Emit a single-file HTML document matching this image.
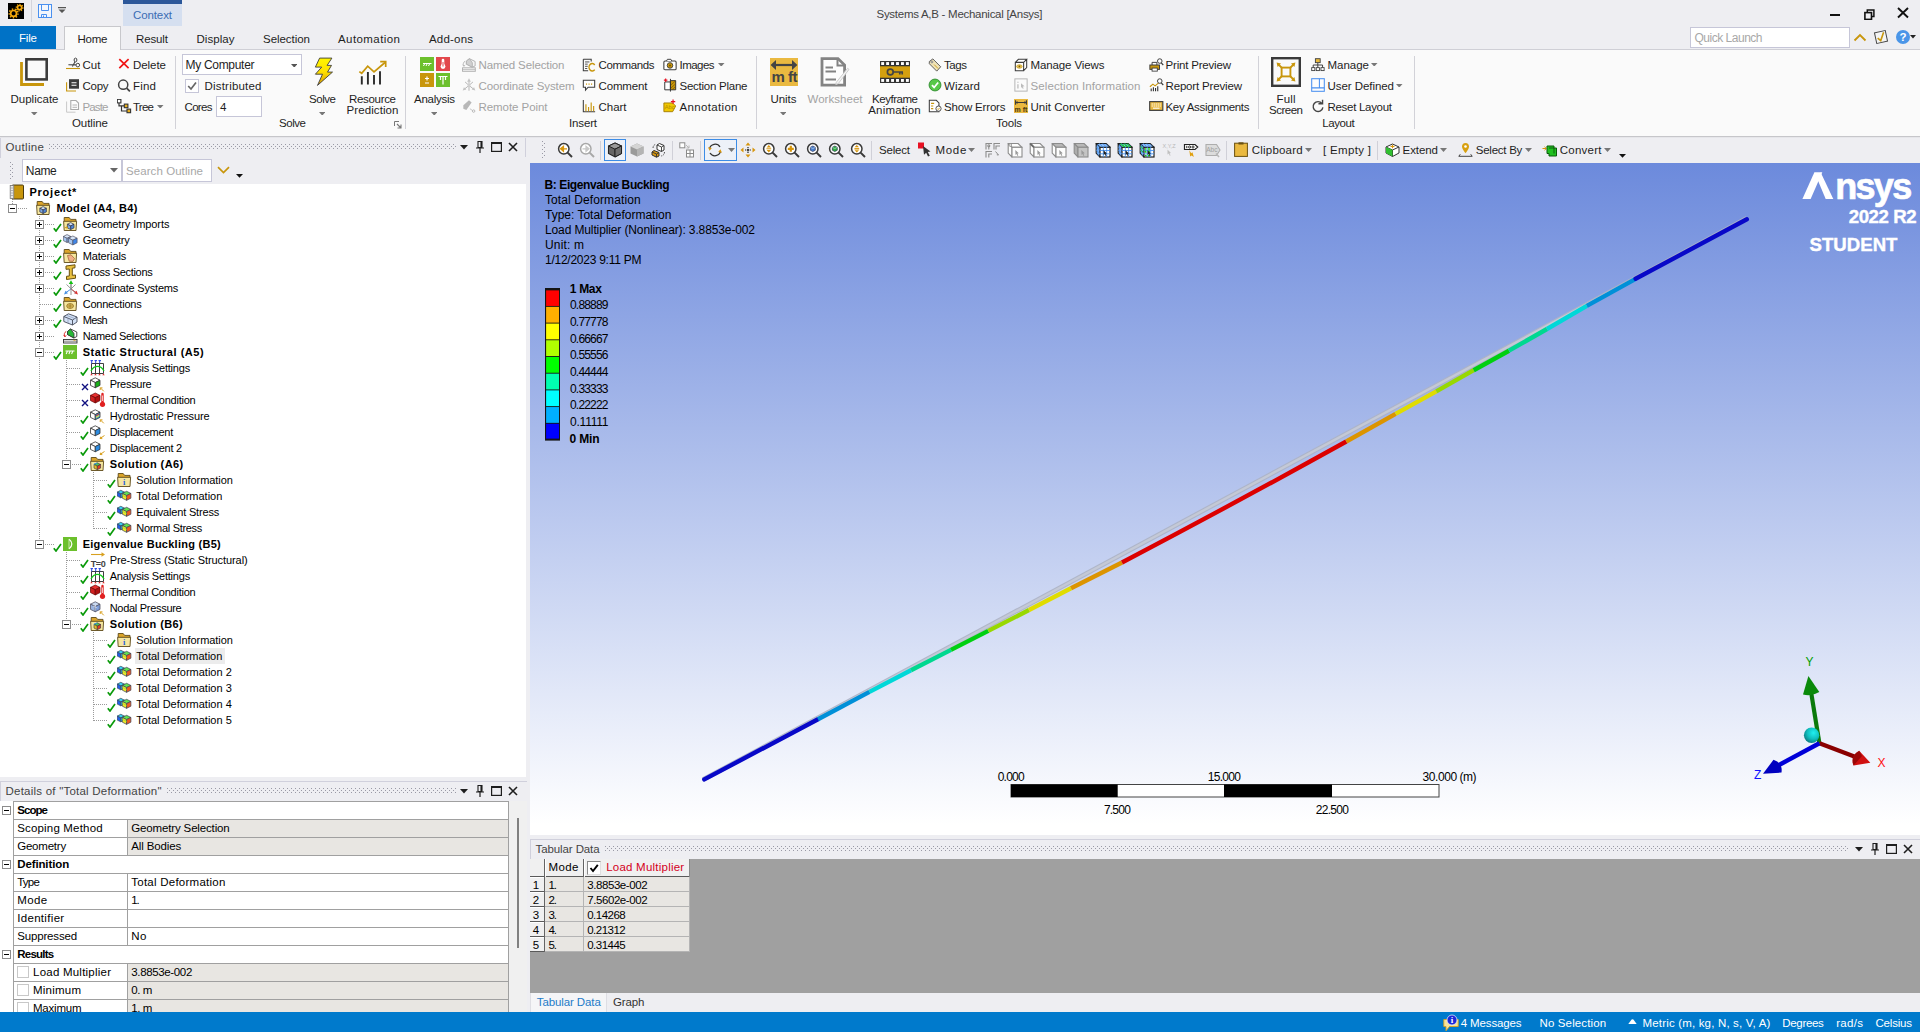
<!DOCTYPE html>
<html><head><meta charset="utf-8"><title>Systems A,B - Mechanical [Ansys]</title>
<style>
html,body{margin:0;padding:0;}
body{width:1920px;height:1032px;overflow:hidden;position:relative;background:#eeeef2;font-family:"Liberation Sans",sans-serif;}
.t{position:absolute;white-space:pre;font-family:"Liberation Sans",sans-serif;}
.r{position:absolute;display:block;}
svg text{white-space:pre;}
</style></head><body>
<div class="r" style="left:0px;top:0px;width:1920px;height:50px;background:#eeeef2;"></div>
<svg class="r" style="left:8px;top:3px;" width="16" height="16" viewBox="0 0 16 16"><rect width="16" height="16" fill="#000"/><g fill="none" stroke="#f5a80c" stroke-width="1.7"><circle cx="5.6" cy="10.4" r="2.9"/><circle cx="11.6" cy="4.6" r="2.1"/></g><g stroke="#f5a80c" stroke-width="1.4" stroke-dasharray="1.5 1.55" fill="none"><circle cx="5.6" cy="10.4" r="4.4"/></g><g stroke="#f5a80c" stroke-width="1.2" stroke-dasharray="1.2 1.3" fill="none"><circle cx="11.6" cy="4.6" r="3.3"/></g></svg>
<div class="r" style="left:31px;top:0px;width:1px;height:22px;background:#d4d4dc;"></div>
<svg class="r" style="left:38px;top:4px;" width="14" height="14" viewBox="0 0 14 14"><rect x="0.5" y="0.5" width="13" height="13" fill="#f3f6fc" stroke="#4a90f0" stroke-width="1"/><path d="M3.5 0.5V6.5H10.5V0.5" fill="none" stroke="#4a90f0" stroke-width="1"/><path d="M3.5 13.5V10.5H8.5V13.5M5.5 11.5V13.5" fill="none" stroke="#4a90f0" stroke-width="1"/></svg>
<svg class="r" style="left:58px;top:7px;" width="8" height="6" viewBox="0 0 8 6"><path d="M0 0H8V1.2H0z M0.5 2.5H7.5L4 6z" fill="#555"/></svg>
<div class="r" style="left:123px;top:0px;width:59px;height:4px;background:#2b579a;"></div>
<div class="r" style="left:123px;top:4px;width:59px;height:22px;background:#d5dff0;"></div>
<span class="t" style="left:133.00px;top:7.80px;font-size:11.5px;line-height:14px;color:#3a6cb4;letter-spacing:-0.105px;">Context</span>
<span class="t" style="left:876.50px;top:7.00px;font-size:11.5px;line-height:14px;color:#444;letter-spacing:-0.273px;">Systems A,B - Mechanical [Ansys]</span>
<div class="r" style="left:1830px;top:14px;width:10px;height:2px;background:#111;"></div>
<svg class="r" style="left:1863.5px;top:8.8px;" width="11" height="11.5" viewBox="0 0 11 11.5"><path d="M3.3 3.2V0.9H9.9V7.5H7.8" fill="none" stroke="#111" stroke-width="1.5"/><rect x="0.9" y="3.6" width="6.6" height="6.8" fill="none" stroke="#111" stroke-width="1.6"/></svg>
<svg class="r" style="left:1897px;top:7px;" width="12" height="12" viewBox="0 0 12 12"><path d="M1 1L11 10.5M11 1L1 10.5" stroke="#111" stroke-width="1.9"/></svg>
<div class="r" style="left:0px;top:26px;width:56px;height:23px;background:#0072c6;"></div>
<span class="t" style="left:19.00px;top:31.00px;font-size:11.5px;line-height:14px;color:#fff;letter-spacing:-0.176px;">File</span>
<div class="r" style="left:0px;top:49px;width:1920px;height:1px;background:#cfcfd6;"></div>
<div class="r" style="left:0px;top:50px;width:1920px;height:86px;background:#fafafa;"></div>
<div class="r" style="left:0px;top:136px;width:1920px;height:1px;background:#c6c6ca;"></div>
<div class="r" style="left:0px;top:137px;width:1920px;height:1px;background:#e6e6ea;"></div>
<div class="r" style="left:64px;top:26px;width:57px;height:24px;background:#fafafa;border:1px solid #c8c8cc;box-sizing:border-box;border-bottom:none;"></div>
<span class="t" style="left:77.50px;top:32.00px;font-size:11.5px;line-height:14px;color:#1e1e1e;letter-spacing:-0.225px;">Home</span>
<span class="t" style="left:136.00px;top:32.00px;font-size:11.5px;line-height:14px;color:#1e1e1e;letter-spacing:-0.119px;">Result</span>
<span class="t" style="left:196.50px;top:32.00px;font-size:11.5px;line-height:14px;color:#1e1e1e;letter-spacing:0.049px;">Display</span>
<span class="t" style="left:263.00px;top:32.00px;font-size:11.5px;line-height:14px;color:#1e1e1e;letter-spacing:-0.038px;">Selection</span>
<span class="t" style="left:338.00px;top:32.00px;font-size:11.5px;line-height:14px;color:#1e1e1e;letter-spacing:0.426px;">Automation</span>
<span class="t" style="left:429.00px;top:32.00px;font-size:11.5px;line-height:14px;color:#1e1e1e;letter-spacing:0.195px;">Add-ons</span>
<div class="r" style="left:1690px;top:27px;width:160px;height:21px;background:#fff;border:1px solid #c6c6d8;box-sizing:border-box;"></div>
<span class="t" style="left:1694.50px;top:30.00px;font-size:12px;line-height:16px;color:#a8a8a8;letter-spacing:-0.488px;">Quick Launch</span>
<svg class="r" style="left:1853px;top:33px;" width="14" height="9" viewBox="0 0 14 9"><path d="M1.5 7.5L7 2L12.5 7.5" fill="none" stroke="#c8960c" stroke-width="1.8"/></svg>
<svg class="r" style="left:1873px;top:29px;" width="16" height="16" viewBox="0 0 16 16"><g transform="rotate(-12 8 8)"><rect x="2.5" y="2.5" width="11" height="11" fill="#f4f4f4" stroke="#444" stroke-width="1"/><path d="M4.5 8.5L7 11.5L11.5 4" fill="none" stroke="#c8960c" stroke-width="1.6"/></g></svg>
<svg class="r" style="left:1896px;top:30px;" width="14" height="14" viewBox="0 0 14 14"><circle cx="7" cy="7" r="7" fill="#4a95e8"/><text x="7" y="11.3" font-family="Liberation Sans" font-weight="bold" font-size="11.5" fill="#fff" text-anchor="middle">?</text></svg>
<svg class="r" style="left:1910px;top:35px;" width="7" height="4" viewBox="0 0 7 4"><path d="M0 0H6L3 3.5z" fill="#222"/></svg>
<svg class="r" style="left:19px;top:57px;" width="30" height="30" viewBox="0 0 30 30"><path d="M2.5 5V27.5H25" fill="none" stroke="#c8960c" stroke-width="2.8"/><rect x="7.4" y="2.3" width="20.3" height="20.1" fill="#fafafa" stroke="#3c3c3c" stroke-width="2.6"/></svg>
<span class="t" style="left:10.50px;top:92.10px;font-size:11.5px;line-height:14px;color:#1e1e1e;letter-spacing:0.007px;">Duplicate</span>
<svg class="r" style="left:31.3px;top:111.7px;" width="6.5" height="3.6" viewBox="0 0 6.5 3.6"><path d="M0 0H6.5L3.25 3.6z" fill="#777"/></svg>
<svg class="r" style="left:66px;top:57px;" width="16" height="16" viewBox="0 0 16 16"><path d="M0 11.5H14" stroke="#c8960c" stroke-width="1.1"/><path d="M2.4 7.7L9.9 7.9M9 4.8L6.4 9.6" stroke="#444" stroke-width="1.1" fill="none"/><ellipse cx="9.5" cy="3" rx="1.4" ry="1.9" fill="none" stroke="#444" stroke-width="1"/><circle cx="11.8" cy="8.1" r="1.8" fill="none" stroke="#444" stroke-width="1"/></svg>
<span class="t" style="left:82.50px;top:58.00px;font-size:11.5px;line-height:14px;color:#1e1e1e;letter-spacing:0.052px;">Cut</span>
<svg class="r" style="left:66px;top:78px;" width="16" height="16" viewBox="0 0 16 16"><path d="M0.6 4.3V13H10" fill="none" stroke="#c8960c" stroke-width="1.1"/><rect x="3" y="1.2" width="10" height="9.5" fill="#3c3c3c"/><path d="M5.5 4.8H10.5M5.5 7.2H10.5" stroke="#fff" stroke-width="1.1"/></svg>
<span class="t" style="left:82.50px;top:79.00px;font-size:11.5px;line-height:14px;color:#1e1e1e;letter-spacing:-0.282px;">Copy</span>
<svg class="r" style="left:66px;top:99px;" width="16" height="16" viewBox="0 0 16 16"><path d="M0.6 2.5V13.2H9.5" fill="none" stroke="#c8c8c8" stroke-width="1"/><path d="M4.8 1.5H10L12.5 4V10.5H4.8z" fill="#fdfdfd" stroke="#aaa" stroke-width="1.1"/><path d="M6.5 6H11M6.5 8.3H11" stroke="#b4b4b4" stroke-width="1"/></svg>
<span class="t" style="left:82.50px;top:100.00px;font-size:11.5px;line-height:14px;color:#a3a3a3;letter-spacing:-0.851px;">Paste</span>
<svg class="r" style="left:117px;top:57px;" width="16" height="16" viewBox="0 0 16 16"><path d="M2.3 2.2L11.6 11.2M11.6 2.2L2.3 11.2" stroke="#f01414" stroke-width="1.7"/></svg>
<span class="t" style="left:133.00px;top:58.00px;font-size:11.5px;line-height:14px;color:#1e1e1e;letter-spacing:-0.048px;">Delete</span>
<svg class="r" style="left:117px;top:78px;" width="16" height="16" viewBox="0 0 16 16"><circle cx="6.2" cy="6.7" r="4.6" fill="none" stroke="#444" stroke-width="1.5"/><path d="M9.6 10.1L12.9 13.3" stroke="#444" stroke-width="1.8"/></svg>
<span class="t" style="left:133.00px;top:79.00px;font-size:11.5px;line-height:14px;color:#1e1e1e;letter-spacing:0.210px;">Find</span>
<svg class="r" style="left:117px;top:99px;" width="16" height="16" viewBox="0 0 16 16"><path d="M2 3.5V6.8H7M4.5 6.8V12H10" fill="none" stroke="#333" stroke-width="1.2"/><rect x="0.3" y="0.3" width="3.6" height="3.6" fill="#fff" stroke="#333" stroke-width="1.1"/><rect x="7.3" y="5.1" width="3.6" height="3.6" fill="#e8b020" stroke="#333" stroke-width="1.1"/><rect x="10" y="10.1" width="3.6" height="3.6" fill="#e8b020" stroke="#333" stroke-width="1.1"/></svg>
<span class="t" style="left:133.00px;top:100.00px;font-size:11.5px;line-height:14px;color:#1e1e1e;letter-spacing:-0.739px;">Tree</span>
<svg class="r" style="left:157.3px;top:104.7px;" width="6.5" height="3.6" viewBox="0 0 6.5 3.6"><path d="M0 0H6.5L3.25 3.6z" fill="#777"/></svg>
<span class="t" style="left:72.00px;top:116.00px;font-size:11.5px;line-height:14px;color:#1e1e1e;letter-spacing:-0.073px;">Outline</span>
<div class="r" style="left:175px;top:56px;width:1px;height:73px;background:#d2d2d8;"></div>
<div class="r" style="left:182px;top:54px;width:120px;height:21px;background:#fff;border:1px solid #c6c6d8;box-sizing:border-box;"></div>
<span class="t" style="left:185.50px;top:57.00px;font-size:12px;line-height:16px;color:#1e1e1e;letter-spacing:-0.301px;">My Computer</span>
<svg class="r" style="left:290.8px;top:63.7px;" width="6.5" height="3.6" viewBox="0 0 6.5 3.6"><path d="M0 0H6.5L3.25 3.6z" fill="#555"/></svg>
<div class="r" style="left:185px;top:79px;width:14px;height:14px;background:#fff;border:1px solid #c6c6d8;box-sizing:border-box;"></div>
<svg class="r" style="left:187px;top:81px;" width="10" height="10" viewBox="0 0 10 10"><path d="M1.2 5L4 8L9 1.5" fill="none" stroke="#666" stroke-width="1.7"/></svg>
<span class="t" style="left:204.50px;top:79.00px;font-size:11.5px;line-height:14px;color:#1e1e1e;letter-spacing:0.204px;">Distributed</span>
<span class="t" style="left:184.50px;top:100.00px;font-size:11.5px;line-height:14px;color:#1e1e1e;letter-spacing:-0.669px;">Cores</span>
<div class="r" style="left:216px;top:96px;width:46px;height:21px;background:#fff;border:1px solid #c6c6d8;box-sizing:border-box;"></div>
<span class="t" style="left:220.00px;top:100.00px;font-size:11.5px;line-height:14px;color:#1e1e1e;">4</span>
<span class="t" style="left:279.00px;top:116.00px;font-size:11.5px;line-height:14px;color:#1e1e1e;letter-spacing:-0.442px;">Solve</span>
<svg class="r" style="left:311px;top:56px;" width="26" height="30" viewBox="0 0 26 30"><defs><linearGradient id="bg1" x1="0" y1="0" x2="0" y2="1"><stop offset="0" stop-color="#fff600"/><stop offset="0.5" stop-color="#ffe000"/><stop offset="1" stop-color="#d89a00"/></linearGradient></defs><path d="M8.6 2.1H20.9L16.1 9.4H20.5L16.5 16.1H21.5L6.5 29.4L11.5 18.2H4.4L10.7 11.1H4.4z" fill="url(#bg1)" stroke="#3c3c3c" stroke-width="0.9" stroke-linejoin="miter"/></svg>
<span class="t" style="left:309.00px;top:92.10px;font-size:11.5px;line-height:14px;color:#1e1e1e;letter-spacing:-0.442px;">Solve</span>
<svg class="r" style="left:318.8px;top:111.7px;" width="6.5" height="3.6" viewBox="0 0 6.5 3.6"><path d="M0 0H6.5L3.25 3.6z" fill="#777"/></svg>
<svg class="r" style="left:357px;top:58px;" width="32" height="28" viewBox="0 0 32 28"><path d="M4.8 18.2V26.6M10.9 14.1V26.6M17 17V26.6M23 13.2V26.6" stroke="#2a2a2a" stroke-width="1.9"/><path d="M2.3 13.6L4.7 15.3L10.7 8.2L17 13.8L28 4.5" fill="none" stroke="#c8960c" stroke-width="1.7"/><path d="M23.2 3.7H28.7V9" fill="none" stroke="#c8960c" stroke-width="1.7"/></svg>
<span class="t" style="left:349.00px;top:92.10px;font-size:11.5px;line-height:14px;color:#1e1e1e;letter-spacing:-0.316px;">Resource</span>
<span class="t" style="left:346.50px;top:103.10px;font-size:11.5px;line-height:14px;color:#1e1e1e;letter-spacing:0.096px;">Prediction</span>
<svg class="r" style="left:394px;top:121px;" width="8" height="8" viewBox="0 0 8 8"><path d="M0.5 5V0.5H5" fill="none" stroke="#777" stroke-width="1"/><path d="M3 3L7 7M7 3.5V7H3.5" fill="none" stroke="#777" stroke-width="1.1"/></svg>
<div class="r" style="left:405px;top:56px;width:1px;height:73px;background:#d2d2d8;"></div>
<svg class="r" style="left:420px;top:57px;" width="30" height="30" viewBox="0 0 30 30"><rect x="0" y="0" width="14" height="14" fill="#6cc02c"/><rect x="16" y="0" width="14" height="14" fill="#e2474b"/><rect x="0" y="16" width="14" height="14" fill="#c8960c"/><rect x="16" y="16" width="14" height="14" fill="#6cc02c"/><path d="M3 6.5H11.5M4.5 7L3.5 9M7 7L6 9M9.5 7L8.5 9" stroke="#fff" stroke-width="1"/><path d="M23 3V8.5" stroke="#fff" stroke-width="2.6" stroke-linecap="round"/><circle cx="23" cy="9.5" r="2.4" fill="#fff"/><path d="M23 5V9.5" stroke="#e2474b" stroke-width="1"/><path d="M7 19.5V23.5M5 21.5H9M5 26H9" stroke="#fff" stroke-width="1.2"/><path d="M18.5 19.5H27.5M23 19.5V27.5M20.5 20V23M25.5 20V23" stroke="#fff" stroke-width="1.2"/></svg>
<span class="t" style="left:414.00px;top:92.10px;font-size:11.5px;line-height:14px;color:#1e1e1e;letter-spacing:-0.260px;">Analysis</span>
<svg class="r" style="left:430.8px;top:111.7px;" width="6.5" height="3.6" viewBox="0 0 6.5 3.6"><path d="M0 0H6.5L3.25 3.6z" fill="#777"/></svg>
<svg class="r" style="left:461.8px;top:57.5px;" width="14.0" height="14" viewBox="0 0 16 16"><rect x="0.6" y="11.2" width="14.6" height="4" fill="#f4f4f4" stroke="#b0b0b0" stroke-width="1.1"/><path d="M0.6 13.2H15.2" stroke="#b0b0b0" stroke-width="0.8"/><path d="M5 3.5L8.5 0.8L15 4V9L11.8 10.5L5 7z" fill="#f4f4f4" stroke="#b0b0b0" stroke-width="1.1"/><path d="M5 3.5L8.5 0.8L11.8 5.5V10.5L5 7z" fill="#d0d0d0" stroke="#b0b0b0" stroke-width="1"/><path d="M3.6 3.6C1.4 4.8 1 7 2 9" fill="none" stroke="#b0b0b0" stroke-width="1"/><path d="M0.8 7.6L2.2 9.6L3.6 7.8" fill="none" stroke="#b0b0b0" stroke-width="0.9"/></svg>
<span class="t" style="left:478.50px;top:58.00px;font-size:11.5px;line-height:14px;color:#a3a3a3;letter-spacing:-0.112px;">Named Selection</span>
<svg class="r" style="left:461.8px;top:78.3px;" width="14.0" height="14" viewBox="0 0 16 16"><g stroke="#b4b4b4" stroke-width="1.1"><path d="M8 8.5V3M8 8.5L3 12.5M8 8.5L13 12.5M8 8.5L3.5 4.5M8 8.5L12.5 4.5M8 8.5V14.5"/></g><path d="M5.8 4.2L8 0.3L10.2 4.2z" fill="#c4c4c4"/><path d="M0.8 14.3L2.2 10.6L5 13z" fill="#c4c4c4"/><path d="M15.2 14.3L13.8 10.6L11 13z" fill="#c4c4c4"/><circle cx="8" cy="8.5" r="1.6" fill="#d0d0d0"/></svg>
<span class="t" style="left:478.50px;top:79.00px;font-size:11.5px;line-height:14px;color:#a3a3a3;letter-spacing:-0.112px;">Coordinate System</span>
<svg class="r" style="left:461.8px;top:99.3px;" width="14.0" height="14" viewBox="0 0 16 16"><path d="M1.5 7L8 1.5L11 4L5 12.5L1.5 11z" fill="#b8b8b8"/><path d="M9 11L13 14" stroke="#bdbdbd" stroke-width="1"/><circle cx="13.3" cy="13.8" r="1.4" fill="#fff" stroke="#b0b0b0" stroke-width="1"/></svg>
<span class="t" style="left:478.50px;top:100.00px;font-size:11.5px;line-height:14px;color:#a3a3a3;letter-spacing:-0.061px;">Remote Point</span>
<svg class="r" style="left:581.8px;top:57.5px;" width="14.0" height="14" viewBox="0 0 16 16"><path d="M1.5 1.5H10.5V4M1.5 1.5V14.5H7" fill="none" stroke="#3c3c3c" stroke-width="1.2"/><path d="M3.5 4.5H8.5M3.5 7H6.5M3.5 9.5H6.5M3.5 12H6" stroke="#3c3c3c" stroke-width="1"/><path d="M14.5 8A3.6 4.2 0 1 0 14.5 13.2" fill="none" stroke="#c8960c" stroke-width="1.7"/></svg>
<span class="t" style="left:598.50px;top:58.00px;font-size:11.5px;line-height:14px;color:#1e1e1e;letter-spacing:-0.399px;">Commands</span>
<svg class="r" style="left:581.8px;top:78.3px;" width="14.0" height="14" viewBox="0 0 16 16"><path d="M1.5 2.5H14.5V10.5H7L4 13.8V10.5H1.5z" fill="#fff" stroke="#3c3c3c" stroke-width="1.2"/><path d="M4.5 7H5.8M7.4 7H8.7M10.3 7H11.6" stroke="#c8960c" stroke-width="1.3"/></svg>
<span class="t" style="left:598.50px;top:79.00px;font-size:11.5px;line-height:14px;color:#1e1e1e;letter-spacing:-0.141px;">Comment</span>
<svg class="r" style="left:581.8px;top:99.3px;" width="14.0" height="14" viewBox="0 0 16 16"><path d="M1.5 1V14.5H15" fill="none" stroke="#3c3c3c" stroke-width="1.2"/><path d="M4.5 14V6M7.5 14V9M10.5 14V4M13.3 14V8" stroke="#c8960c" stroke-width="1.3"/></svg>
<span class="t" style="left:598.50px;top:100.00px;font-size:11.5px;line-height:14px;color:#1e1e1e;letter-spacing:-0.030px;">Chart</span>
<svg class="r" style="left:662.8px;top:57.5px;" width="14.0" height="14" viewBox="0 0 16 16"><rect x="1" y="3.5" width="14" height="10" rx="1.3" fill="#fff" stroke="#3c3c3c" stroke-width="1.2"/><path d="M4 3.5L5 1.5H9L10 3.5" fill="#fff" stroke="#3c3c3c" stroke-width="1.1"/><circle cx="8" cy="8.5" r="3.2" fill="#c8960c" stroke="#3c3c3c" stroke-width="1"/><circle cx="8" cy="8.5" r="1.2" fill="#7a5a00"/></svg>
<span class="t" style="left:679.50px;top:58.00px;font-size:11.5px;line-height:14px;color:#1e1e1e;letter-spacing:-0.542px;">Images</span>
<svg class="r" style="left:718.3px;top:62.7px;" width="6.5" height="3.6" viewBox="0 0 6.5 3.6"><path d="M0 0H6.5L3.25 3.6z" fill="#777"/></svg>
<svg class="r" style="left:662.8px;top:78.3px;" width="14.0" height="14" viewBox="0 0 16 16"><path d="M2 4.5H8.5V13.5H2z" fill="#fff" stroke="#333" stroke-width="1.1"/><path d="M8.5 3H14.5V13.5H8.5z" fill="#c8960c" stroke="#333" stroke-width="1.1"/><path d="M9 8L14 3.5M9 11.5L14 7M10.5 13.3L14 10" stroke="#7a5a00" stroke-width="0.8"/><path d="M8.5 1V15.5" stroke="#333" stroke-width="1.1"/><path d="M3 0.5V4.5M1 2.5H5" stroke="#e81123" stroke-width="1.3"/></svg>
<span class="t" style="left:679.50px;top:79.00px;font-size:11.5px;line-height:14px;color:#1e1e1e;letter-spacing:-0.247px;">Section Plane</span>
<svg class="r" style="left:662.8px;top:99.3px;" width="14.0" height="14" viewBox="0 0 16 16"><path d="M1 4.5H11L14.5 8L11 14.5H1z" fill="#f0c800" stroke="#a07800" stroke-width="1"/><text x="2" y="11.5" font-family="Liberation Sans" font-size="6.5" fill="#b48a00">Abc</text><path d="M11.5 0.5V5.5M9 3H14" stroke="#e81123" stroke-width="1.4"/></svg>
<span class="t" style="left:679.50px;top:100.00px;font-size:11.5px;line-height:14px;color:#1e1e1e;letter-spacing:0.335px;">Annotation</span>
<span class="t" style="left:569.00px;top:116.00px;font-size:11.5px;line-height:14px;color:#1e1e1e;letter-spacing:-0.152px;">Insert</span>
<div class="r" style="left:756px;top:56px;width:1px;height:73px;background:#d2d2d8;"></div>
<svg class="r" style="left:770px;top:58px;" width="28" height="28" viewBox="0 0 28 28"><rect width="28" height="28" fill="#eab940"/><path d="M4 7H24" stroke="#444" stroke-width="2.2"/><path d="M0.6 7L6 2V12z M27.4 7L22 2V12z" fill="#444"/><text x="14.2" y="24" font-family="Liberation Sans" font-weight="bold" font-size="15" fill="#444" text-anchor="middle" letter-spacing="-0.5">m ft</text></svg>
<span class="t" style="left:770.50px;top:92.10px;font-size:11.5px;line-height:14px;color:#1e1e1e;letter-spacing:-0.050px;">Units</span>
<svg class="r" style="left:779.8px;top:111.7px;" width="6.5" height="3.6" viewBox="0 0 6.5 3.6"><path d="M0 0H6.5L3.25 3.6z" fill="#777"/></svg>
<svg class="r" style="left:820px;top:57px;" width="30" height="30" viewBox="0 0 30 30"><path d="M2 1.6H18L24.6 8V28.2H2z" fill="#fdfdfd" stroke="#838383" stroke-width="2.8" stroke-linejoin="miter"/><path d="M17.5 2V8.6H24.5" fill="none" stroke="#838383" stroke-width="2"/><path d="M5.5 10.5H13M5.5 14.5H16M5.5 22.5H16" stroke="#838383" stroke-width="1.8"/><path d="M27.6 11.3L16.3 25.3L15.8 27.6L18.3 26.6L29 12.4z" fill="#f4f4f4" stroke="#c8c8c8" stroke-width="0.9"/></svg>
<span class="t" style="left:807.50px;top:92.10px;font-size:11.5px;line-height:14px;color:#a3a3a3;letter-spacing:0.031px;">Worksheet</span>
<svg class="r" style="left:880px;top:61px;" width="30" height="22" viewBox="0 0 30 22"><rect width="30" height="22" fill="#333"/><rect x="0" y="5.3" width="30" height="11.4" fill="#d4a010"/><rect x="1.20" y="1.1" width="2.9" height="2.9" fill="#fff"/><rect x="1.20" y="18" width="2.9" height="2.9" fill="#fff"/><rect x="6.15" y="1.1" width="2.9" height="2.9" fill="#fff"/><rect x="6.15" y="18" width="2.9" height="2.9" fill="#fff"/><rect x="11.10" y="1.1" width="2.9" height="2.9" fill="#fff"/><rect x="11.10" y="18" width="2.9" height="2.9" fill="#fff"/><rect x="16.05" y="1.1" width="2.9" height="2.9" fill="#fff"/><rect x="16.05" y="18" width="2.9" height="2.9" fill="#fff"/><rect x="21.00" y="1.1" width="2.9" height="2.9" fill="#fff"/><rect x="21.00" y="18" width="2.9" height="2.9" fill="#fff"/><rect x="25.95" y="1.1" width="2.9" height="2.9" fill="#fff"/><rect x="25.95" y="18" width="2.9" height="2.9" fill="#fff"/><circle cx="10.3" cy="11" r="2.9" fill="none" stroke="#444" stroke-width="1.7"/><path d="M13 11H23M19.8 11V13.6M22.2 11V13.6" stroke="#444" stroke-width="1.7" fill="none"/></svg>
<span class="t" style="left:872.00px;top:92.10px;font-size:11.5px;line-height:14px;color:#1e1e1e;letter-spacing:-0.458px;">Keyframe</span>
<span class="t" style="left:868.25px;top:103.10px;font-size:11.5px;line-height:14px;color:#1e1e1e;letter-spacing:0.171px;">Animation</span>
<svg class="r" style="left:927.8px;top:57.5px;" width="14.0" height="14" viewBox="0 0 16 16"><path d="M1.5 4L5.5 1L14.5 10L10 15L1.5 6.5z" fill="#efe3b8" stroke="#5a5a5a" stroke-width="1.1"/><circle cx="4.5" cy="4.5" r="1.1" fill="#fff" stroke="#5a5a5a" stroke-width="0.8"/><path d="M7 7.5L11.5 12" stroke="#c8960c" stroke-width="1"/></svg>
<span class="t" style="left:944.00px;top:58.00px;font-size:11.5px;line-height:14px;color:#1e1e1e;letter-spacing:-0.430px;">Tags</span>
<svg class="r" style="left:927.8px;top:78.3px;" width="14.0" height="14" viewBox="0 0 16 16"><circle cx="8" cy="8" r="6.8" fill="#58c848" stroke="#2e8a2e" stroke-width="1"/><path d="M4.5 8.2L7 10.8L11.6 5.2" fill="none" stroke="#fff" stroke-width="2"/></svg>
<span class="t" style="left:944.00px;top:79.00px;font-size:11.5px;line-height:14px;color:#1e1e1e;letter-spacing:0.044px;">Wizard</span>
<svg class="r" style="left:927.8px;top:99.3px;" width="14.0" height="14" viewBox="0 0 16 16"><path d="M1.5 1.5H9.5L12.5 4.5V14.5H1.5z" fill="#fff" stroke="#3c3c3c" stroke-width="1.2"/><path d="M3.5 5H7M3.5 8H6M3.5 11H6" stroke="#c8960c" stroke-width="1.2"/><circle cx="12" cy="11" r="3" fill="#fff" stroke="#3c3c3c" stroke-width="1"/><path d="M10.7 11L11.7 12L13.4 10" fill="none" stroke="#c8960c" stroke-width="1"/></svg>
<span class="t" style="left:944.00px;top:100.00px;font-size:11.5px;line-height:14px;color:#1e1e1e;letter-spacing:-0.176px;">Show Errors</span>
<svg class="r" style="left:1013.8px;top:57.5px;" width="14.0" height="14" viewBox="0 0 16 16"><path d="M1.5 5H11V14.5H1.5z M1.5 5L5 1.5H14.5L11 5M14.5 1.5V11L11 14.5" fill="#fff" stroke="#3c3c3c" stroke-width="1.2"/><ellipse cx="6.2" cy="9.7" rx="3.2" ry="2" fill="#e8c860" stroke="#c8960c" stroke-width="0.8"/><circle cx="6.2" cy="9.7" r="1" fill="#7a5a00"/></svg>
<span class="t" style="left:1030.50px;top:58.00px;font-size:11.5px;line-height:14px;color:#1e1e1e;letter-spacing:-0.111px;">Manage Views</span>
<svg class="r" style="left:1013.8px;top:78.3px;" width="14.0" height="14" viewBox="0 0 16 16"><rect x="1" y="1" width="14" height="14" fill="#fbfbfb" stroke="#b4b4b4" stroke-width="1.1"/><path d="M4.5 7V12M4.5 4.3V5.3" stroke="#b4b4b4" stroke-width="1.3"/><path d="M8 6L12 9.5L10 9.8L11 12L10 12.4L9 10.3L8 11.5z" fill="#bcbcbc"/></svg>
<span class="t" style="left:1030.50px;top:79.00px;font-size:11.5px;line-height:14px;color:#a3a3a3;letter-spacing:0.099px;">Selection Information</span>
<svg class="r" style="left:1013.8px;top:99.3px;" width="14.0" height="14" viewBox="0 0 16 16"><rect width="16" height="16" fill="#eab940"/><path d="M1.5 4H14.5M1.8 1.5V6.5M14.2 1.5V6.5" stroke="#3a3a3a" stroke-width="1.2"/><path d="M1.5 4L4 2.3V5.7z M14.5 4L12 2.3V5.7z" fill="#3a3a3a"/><text x="8" y="14.3" font-family="Liberation Sans" font-weight="bold" font-size="8" fill="#4a3a10" text-anchor="middle">m ft</text></svg>
<span class="t" style="left:1030.50px;top:100.00px;font-size:11.5px;line-height:14px;color:#1e1e1e;letter-spacing:0.028px;">Unit Converter</span>
<svg class="r" style="left:1148.8px;top:57.5px;" width="14.88" height="14" viewBox="0 0 17 16"><path d="M3.5 8V5H9V8" fill="#fff" stroke="#3c3c3c" stroke-width="1.1"/><rect x="1" y="8" width="11" height="5" fill="#c8960c" stroke="#3c3c3c" stroke-width="1.1"/><rect x="3.5" y="11.5" width="6" height="3.5" fill="#fff" stroke="#3c3c3c" stroke-width="1"/><circle cx="12.3" cy="3.5" r="2.6" fill="#fff" stroke="#3c3c3c" stroke-width="1.1"/><path d="M14 5.5L16.3 8" stroke="#3c3c3c" stroke-width="1.3"/></svg>
<span class="t" style="left:1165.50px;top:58.00px;font-size:11.5px;line-height:14px;color:#1e1e1e;letter-spacing:-0.187px;">Print Preview</span>
<svg class="r" style="left:1148.8px;top:78.3px;" width="14.88" height="14" viewBox="0 0 17 16"><path d="M2.5 15V12M5 15V10.5M7.5 15V11.5M10 15V9.5" stroke="#2a2a2a" stroke-width="1.2"/><path d="M1 10L4.5 7L7 9L11 5.5" fill="none" stroke="#c8960c" stroke-width="1.3"/><circle cx="12.3" cy="3.5" r="2.6" fill="#fff" stroke="#3c3c3c" stroke-width="1.1"/><path d="M14 5.5L16.3 8" stroke="#3c3c3c" stroke-width="1.3"/></svg>
<span class="t" style="left:1165.50px;top:79.00px;font-size:11.5px;line-height:14px;color:#1e1e1e;letter-spacing:-0.162px;">Report Preview</span>
<svg class="r" style="left:1148.8px;top:99.3px;" width="14.88" height="14" viewBox="0 0 17 16"><rect x="0.8" y="3" width="15" height="10" fill="#eab940" stroke="#3c3c3c" stroke-width="1.3"/><path d="M3 5.7H13.5M3 8H13.5" stroke="#fff" stroke-width="1.2" stroke-dasharray="1.4 0.9"/><path d="M4.5 10.5H12" stroke="#fff" stroke-width="1.2"/></svg>
<span class="t" style="left:1165.50px;top:100.00px;font-size:11.5px;line-height:14px;color:#1e1e1e;letter-spacing:-0.300px;">Key Assignments</span>
<span class="t" style="left:996.00px;top:116.00px;font-size:11.5px;line-height:14px;color:#1e1e1e;letter-spacing:-0.211px;">Tools</span>
<div class="r" style="left:1258px;top:56px;width:1px;height:73px;background:#d2d2d8;"></div>
<svg class="r" style="left:1271px;top:57px;" width="30" height="30" viewBox="0 0 30 30"><rect x="1.2" y="1.2" width="27.6" height="27.6" fill="#fafafa" stroke="#3a3a3a" stroke-width="2.4"/><rect x="10.6" y="10.6" width="8.8" height="8.8" fill="none" stroke="#c8960c" stroke-width="1.9"/><path d="M10.6 10.6L7.5 7.5M19.4 10.6L22.5 7.5M10.6 19.4L7.5 22.5M19.4 19.4L22.5 22.5" stroke="#c8960c" stroke-width="1.9"/><path d="M5.6 5.6L10 6.6L6.6 10zM24.4 5.6L23.4 10L20 6.6zM5.6 24.4L6.6 20L10 23.4zM24.4 24.4L20 23.4L23.4 20z" fill="#c8960c"/></svg>
<span class="t" style="left:1276.50px;top:92.10px;font-size:11.5px;line-height:14px;color:#1e1e1e;letter-spacing:0.157px;">Full</span>
<span class="t" style="left:1269.00px;top:103.10px;font-size:11.5px;line-height:14px;color:#1e1e1e;letter-spacing:-0.487px;">Screen</span>
<svg class="r" style="left:1310.8px;top:57.5px;" width="14.0" height="14" viewBox="0 0 16 16"><rect x="5" y="0.8" width="5.5" height="4.5" fill="#e8b93c" stroke="#3c3c3c" stroke-width="1"/><path d="M7.8 5.5V8M2.5 11V8H13.2V11M7.8 8V11" fill="none" stroke="#3c3c3c" stroke-width="1.1"/><rect x="0.8" y="11" width="3.6" height="3.4" fill="#fff" stroke="#3c3c3c" stroke-width="1"/><rect x="6" y="11" width="3.6" height="3.4" fill="#fff" stroke="#3c3c3c" stroke-width="1"/><rect x="11.4" y="11" width="3.6" height="3.4" fill="#fff" stroke="#3c3c3c" stroke-width="1"/></svg>
<span class="t" style="left:1327.50px;top:58.00px;font-size:11.5px;line-height:14px;color:#1e1e1e;letter-spacing:-0.011px;">Manage</span>
<svg class="r" style="left:1371.3px;top:62.7px;" width="6.5" height="3.6" viewBox="0 0 6.5 3.6"><path d="M0 0H6.5L3.25 3.6z" fill="#777"/></svg>
<svg class="r" style="left:1310.8px;top:78.3px;" width="14.0" height="14" viewBox="0 0 16 16"><rect x="0.8" y="0.8" width="14.4" height="14.4" fill="#fdfdfd" stroke="#4a90f0" stroke-width="1.2"/><path d="M9.6 0.8V11.3M0.8 11.3H15.2" stroke="#4a90f0" stroke-width="1.2"/></svg>
<span class="t" style="left:1327.50px;top:79.00px;font-size:11.5px;line-height:14px;color:#1e1e1e;letter-spacing:-0.055px;">User Defined</span>
<svg class="r" style="left:1396.3px;top:83.7px;" width="6.5" height="3.6" viewBox="0 0 6.5 3.6"><path d="M0 0H6.5L3.25 3.6z" fill="#777"/></svg>
<svg class="r" style="left:1310.8px;top:99.3px;" width="14.0" height="14" viewBox="0 0 16 16"><path d="M12.5 5.2A5.6 5.6 0 1 0 13.6 9.5" fill="none" stroke="#444" stroke-width="1.6"/><path d="M8.5 5.5H13.2V0.8" fill="none" stroke="#444" stroke-width="1.6"/></svg>
<span class="t" style="left:1327.50px;top:100.00px;font-size:11.5px;line-height:14px;color:#1e1e1e;letter-spacing:-0.296px;">Reset Layout</span>
<span class="t" style="left:1322.25px;top:116.00px;font-size:11.5px;line-height:14px;color:#1e1e1e;letter-spacing:-0.405px;">Layout</span>
<div class="r" style="left:1414px;top:56px;width:1px;height:73px;background:#d2d2d8;"></div>
<div class="r" style="left:0px;top:138px;width:527px;height:644px;background:#eeeef2;"></div>
<div class="r" style="left:0px;top:138px;width:1px;height:20px;background:#d0d0dc;"></div>
<span class="t" style="left:5.50px;top:140.40px;font-size:11.5px;line-height:14px;color:#444;letter-spacing:0.344px;">Outline</span>
<svg class="r" style="left:49px;top:144px;" width="408" height="6" viewBox="0 0 408 6"><defs><pattern id="gp49_144" width="4" height="4" patternUnits="userSpaceOnUse"><rect x="0" y="0" width="1" height="1" fill="#9a9aa6"/><rect x="2" y="2" width="1" height="1" fill="#9a9aa6"/></pattern></defs><rect width="408" height="6" fill="url(#gp49_144)"/></svg>
<svg class="r" style="left:460.3px;top:145px;" width="8" height="5" viewBox="0 0 8 5"><path d="M0 0H8L4 4.5z" fill="#1e1e1e"/></svg>
<svg class="r" style="left:475.3px;top:141px;" width="10" height="12" viewBox="0 0 10 12"><path d="M3 0.5H7V6.5H3zM6 0.5V6.5" fill="none" stroke="#1e1e1e" stroke-width="1.1"/><path d="M1 7H9M5 7V12" stroke="#1e1e1e" stroke-width="1.2"/></svg>
<svg class="r" style="left:491.3px;top:142px;" width="11" height="10" viewBox="0 0 11 10"><rect x="0.6" y="0.6" width="9.8" height="8.8" fill="none" stroke="#1e1e1e" stroke-width="1.2"/><path d="M0 1H11" stroke="#1e1e1e" stroke-width="2"/></svg>
<svg class="r" style="left:508.3px;top:142px;" width="10" height="10" viewBox="0 0 10 10"><path d="M1 1L9 9M9 1L1 9" stroke="#1e1e1e" stroke-width="1.6"/></svg>
<svg class="r" style="left:10px;top:162px;" width="4" height="18" viewBox="0 0 4 18"><defs><pattern id="gv" width="4" height="4" patternUnits="userSpaceOnUse"><rect x="0" y="0" width="1" height="1" fill="#9a9aa6"/><rect x="2" y="2" width="1" height="1" fill="#9a9aa6"/></pattern></defs><rect width="4" height="18" fill="url(#gv)"/></svg>
<div class="r" style="left:22px;top:159px;width:100px;height:23px;background:#fff;border:1px solid #c6c6d8;box-sizing:border-box;"></div>
<span class="t" style="left:25.80px;top:163.00px;font-size:12px;line-height:16px;color:#1e1e1e;letter-spacing:-0.336px;">Name</span>
<svg class="r" style="left:110px;top:168px;" width="8" height="5" viewBox="0 0 8 5"><path d="M0 0H8L4 4.5z" fill="#666"/></svg>
<div class="r" style="left:122px;top:159px;width:90px;height:23px;background:#fff;border:1px solid #c6c6d8;box-sizing:border-box;"></div>
<span class="t" style="left:126.00px;top:164.00px;font-size:11.5px;line-height:14px;color:#a8a8a8;letter-spacing:0.072px;">Search Outline</span>
<svg class="r" style="left:217px;top:166px;" width="13" height="8" viewBox="0 0 13 8"><path d="M1 1.2L6.5 6.5L12 1.2" fill="none" stroke="#c8960c" stroke-width="1.7"/></svg>
<svg class="r" style="left:236px;top:174px;" width="7" height="4" viewBox="0 0 7 4"><path d="M0 0H7L3.5 3.8z" fill="#111"/></svg>
<div class="r" style="left:0px;top:184px;width:526px;height:593px;background:#fff;"></div>
<div class="r" style="left:525px;top:138px;width:1px;height:19px;background:#d0d0dc;"></div>
<div class="r" style="left:525px;top:782px;width:1px;height:19px;background:#d0d0dc;"></div>
<div class="r" style="left:12px;top:199px;width:1px;height:5px;background-image:repeating-linear-gradient(180deg,#9a9a9a 0 1px,transparent 1px 2px);"></div>
<div class="r" style="left:39px;top:216px;width:1px;height:329px;background-image:repeating-linear-gradient(180deg,#9a9a9a 0 1px,transparent 1px 2px);"></div>
<div class="r" style="left:66px;top:360px;width:1px;height:100px;background-image:repeating-linear-gradient(180deg,#9a9a9a 0 1px,transparent 1px 2px);"></div>
<div class="r" style="left:93px;top:472px;width:1px;height:57px;background-image:repeating-linear-gradient(180deg,#9a9a9a 0 1px,transparent 1px 2px);"></div>
<div class="r" style="left:66px;top:552px;width:1px;height:68px;background-image:repeating-linear-gradient(180deg,#9a9a9a 0 1px,transparent 1px 2px);"></div>
<div class="r" style="left:93px;top:632px;width:1px;height:89px;background-image:repeating-linear-gradient(180deg,#9a9a9a 0 1px,transparent 1px 2px);"></div>
<svg class="r" style="left:8.5px;top:184px;" width="16" height="16" viewBox="0 0 16 16"><rect x="3" y="1" width="11.5" height="14" rx="1" fill="#c8960c" stroke="#4a3a10" stroke-width="1"/><rect x="1.2" y="1.5" width="3.6" height="13" fill="#e8e8e8" stroke="#777" stroke-width="0.8"/><path d="M1.5 4H4.5M1.5 6.5H4.5M1.5 9H4.5M1.5 11.5H4.5" stroke="#999" stroke-width="0.7"/></svg>
<span class="t" style="left:29.40px;top:185.00px;font-size:11px;line-height:14px;color:#000;font-weight:bold;letter-spacing:0.776px;">Project*</span>
<div class="r" style="left:17.5px;top:208px;width:9.0px;height:1px;background-image:repeating-linear-gradient(90deg,#9a9a9a 0 1px,transparent 1px 2px);"></div>
<svg class="r" style="left:8.0px;top:203.5px;" width="9" height="9" viewBox="0 0 9 9"><rect x="0.5" y="0.5" width="8" height="8" fill="#fff" stroke="#8c8c8c" stroke-width="1"/><path d="M2 4.5H7" stroke="#000" stroke-width="1"/></svg>
<svg class="r" style="left:36px;top:200px;" width="16" height="16" viewBox="0 0 16 16"><path d="M1.2 1.5H6.2L7.6 3.4H13V6H1.2z" fill="#dca52a" stroke="#5e4a18" stroke-width="0.9"/><path d="M0.6 5.3H13.6L13 14.5H1.2z" fill="#f6e7a0" stroke="#5e4a18" stroke-width="0.9"/><path d="M3.8 8.25L7.1 6.6L10.399999999999999 8.25L7.1 9.899999999999999z" fill="#cfe0f7" stroke="#334" stroke-width="0.7"/><path d="M3.8 8.25L7.1 9.899999999999999V13.529999999999998L3.8 11.879999999999999z" fill="#7fa8e0" stroke="#334" stroke-width="0.7"/><path d="M10.399999999999999 8.25L7.1 9.899999999999999V13.529999999999998L10.399999999999999 11.879999999999999z" fill="#4f86d8" stroke="#334" stroke-width="0.7"/></svg>
<span class="t" style="left:56.50px;top:201.00px;font-size:11px;line-height:14px;color:#000;font-weight:bold;letter-spacing:0.355px;">Model (A4, B4)</span>
<div class="r" style="left:44.5px;top:224px;width:9.0px;height:1px;background-image:repeating-linear-gradient(90deg,#9a9a9a 0 1px,transparent 1px 2px);"></div>
<svg class="r" style="left:35.0px;top:219.5px;" width="9" height="9" viewBox="0 0 9 9"><rect x="0.5" y="0.5" width="8" height="8" fill="#fff" stroke="#8c8c8c" stroke-width="1"/><path d="M2 4.5H7" stroke="#000" stroke-width="1"/><path d="M4.5 2V7" stroke="#000" stroke-width="1"/></svg>
<svg class="r" style="left:53px;top:223px;" width="9" height="9" viewBox="0 0 9 9"><path d="M0.8 5.2L3 8L8 1" fill="none" stroke="#0a9a0a" stroke-width="1.7"/></svg>
<svg class="r" style="left:63px;top:216px;" width="16" height="16" viewBox="0 0 16 16"><path d="M1.2 1.5H6.2L7.6 3.4H13V6H1.2z" fill="#dca52a" stroke="#5e4a18" stroke-width="0.9"/><path d="M0.6 5.3H13.6L13 14.5H1.2z" fill="#f6e7a0" stroke="#5e4a18" stroke-width="0.9"/><path d="M4.4 8.25L7.7 6.6L11.0 8.25L7.7 9.899999999999999z" fill="#cfe0f7" stroke="#334" stroke-width="0.7"/><path d="M4.4 8.25L7.7 9.899999999999999V13.529999999999998L4.4 11.879999999999999z" fill="#7fa8e0" stroke="#334" stroke-width="0.7"/><path d="M11.0 8.25L7.7 9.899999999999999V13.529999999999998L11.0 11.879999999999999z" fill="#4f86d8" stroke="#334" stroke-width="0.7"/><path d="M1.8 11.6H4.6M3.5 10.4L4.8 11.6L3.5 12.8" fill="none" stroke="#c8960c" stroke-width="0.9"/></svg>
<span class="t" style="left:82.70px;top:217.00px;font-size:11px;line-height:14px;color:#000;letter-spacing:-0.088px;">Geometry Imports</span>
<div class="r" style="left:44.5px;top:240px;width:9.0px;height:1px;background-image:repeating-linear-gradient(90deg,#9a9a9a 0 1px,transparent 1px 2px);"></div>
<svg class="r" style="left:35.0px;top:235.5px;" width="9" height="9" viewBox="0 0 9 9"><rect x="0.5" y="0.5" width="8" height="8" fill="#fff" stroke="#8c8c8c" stroke-width="1"/><path d="M2 4.5H7" stroke="#000" stroke-width="1"/><path d="M4.5 2V7" stroke="#000" stroke-width="1"/></svg>
<svg class="r" style="left:53px;top:239px;" width="9" height="9" viewBox="0 0 9 9"><path d="M0.8 5.2L3 8L8 1" fill="none" stroke="#0a9a0a" stroke-width="1.7"/></svg>
<svg class="r" style="left:63px;top:232px;" width="16" height="16" viewBox="0 0 16 16"><path d="M0.3 4.475L4.05 2.6L7.8 4.475L4.05 6.35z" fill="#d8e6f8" stroke="#556" stroke-width="0.7"/><path d="M0.3 4.475L4.05 6.35V10.475L0.3 8.6z" fill="#a8c8f0" stroke="#556" stroke-width="0.7"/><path d="M7.8 4.475L4.05 6.35V10.475L7.8 8.6z" fill="#7aa8e6" stroke="#556" stroke-width="0.7"/><path d="M5.6 6.125L9.85 4L14.1 6.125L9.85 8.25z" fill="#d8e6f8" stroke="#556" stroke-width="0.7"/><path d="M5.6 6.125L9.85 8.25V12.925L5.6 10.8z" fill="#a8c8f0" stroke="#556" stroke-width="0.7"/><path d="M14.1 6.125L9.85 8.25V12.925L14.1 10.8z" fill="#3f86e8" stroke="#556" stroke-width="0.7"/></svg>
<span class="t" style="left:82.70px;top:233.00px;font-size:11px;line-height:14px;color:#000;letter-spacing:-0.184px;">Geometry</span>
<div class="r" style="left:44.5px;top:256px;width:9.0px;height:1px;background-image:repeating-linear-gradient(90deg,#9a9a9a 0 1px,transparent 1px 2px);"></div>
<svg class="r" style="left:35.0px;top:251.5px;" width="9" height="9" viewBox="0 0 9 9"><rect x="0.5" y="0.5" width="8" height="8" fill="#fff" stroke="#8c8c8c" stroke-width="1"/><path d="M2 4.5H7" stroke="#000" stroke-width="1"/><path d="M4.5 2V7" stroke="#000" stroke-width="1"/></svg>
<svg class="r" style="left:53px;top:255px;" width="9" height="9" viewBox="0 0 9 9"><path d="M0.8 5.2L3 8L8 1" fill="none" stroke="#0a9a0a" stroke-width="1.7"/></svg>
<svg class="r" style="left:63px;top:248px;" width="16" height="16" viewBox="0 0 16 16"><path d="M1.2 1.5H6.2L7.6 3.4H13V6H1.2z" fill="#dca52a" stroke="#5e4a18" stroke-width="0.9"/><path d="M0.6 5.3H13.6L13 14.5H1.2z" fill="#f6e7a0" stroke="#5e4a18" stroke-width="0.9"/><path d="M4.5 7.5L8 6.8L11.5 10.5L10 13.4L6.2 13.2z" fill="#f0b08a" stroke="#a86a3a" stroke-width="0.8"/></svg>
<span class="t" style="left:82.70px;top:249.00px;font-size:11px;line-height:14px;color:#000;letter-spacing:-0.140px;">Materials</span>
<div class="r" style="left:44.5px;top:272px;width:9.0px;height:1px;background-image:repeating-linear-gradient(90deg,#9a9a9a 0 1px,transparent 1px 2px);"></div>
<svg class="r" style="left:35.0px;top:267.5px;" width="9" height="9" viewBox="0 0 9 9"><rect x="0.5" y="0.5" width="8" height="8" fill="#fff" stroke="#8c8c8c" stroke-width="1"/><path d="M2 4.5H7" stroke="#000" stroke-width="1"/><path d="M4.5 2V7" stroke="#000" stroke-width="1"/></svg>
<svg class="r" style="left:53px;top:271px;" width="9" height="9" viewBox="0 0 9 9"><path d="M0.8 5.2L3 8L8 1" fill="none" stroke="#0a9a0a" stroke-width="1.7"/></svg>
<svg class="r" style="left:63px;top:264px;" width="16" height="16" viewBox="0 0 16 16"><path d="M3 2L12 0.8V3.8L9.3 4.2V11.3L12.5 11V14.2L3.5 15.5V12.3L6.3 12V5L3 5.3z" fill="#e8c040" stroke="#6a5010" stroke-width="1"/></svg>
<span class="t" style="left:82.70px;top:265.00px;font-size:11px;line-height:14px;color:#000;letter-spacing:-0.305px;">Cross Sections</span>
<div class="r" style="left:44.5px;top:288px;width:9.0px;height:1px;background-image:repeating-linear-gradient(90deg,#9a9a9a 0 1px,transparent 1px 2px);"></div>
<svg class="r" style="left:35.0px;top:283.5px;" width="9" height="9" viewBox="0 0 9 9"><rect x="0.5" y="0.5" width="8" height="8" fill="#fff" stroke="#8c8c8c" stroke-width="1"/><path d="M2 4.5H7" stroke="#000" stroke-width="1"/><path d="M4.5 2V7" stroke="#000" stroke-width="1"/></svg>
<svg class="r" style="left:53px;top:287px;" width="9" height="9" viewBox="0 0 9 9"><path d="M0.8 5.2L3 8L8 1" fill="none" stroke="#0a9a0a" stroke-width="1.7"/></svg>
<svg class="r" style="left:63px;top:280px;" width="16" height="16" viewBox="0 0 16 16"><path d="M8 9V2.5" stroke="#555" stroke-width="1"/><path d="M5.8 4L8 0.3L10.2 4z" fill="#10c010"/><path d="M8 9L3 12.5" stroke="#4a90e2" stroke-width="1"/><path d="M1 14.5L2.5 10.8L5 13.2z" fill="#4a90e2"/><path d="M8 9L13 12.5" stroke="#e03030" stroke-width="1"/><path d="M15 14.5L13.5 10.8L11 13.2z" fill="#e03030"/><path d="M3.5 4.5L12.5 13M12.5 4.5L8 9M8 9V15" stroke="#888" stroke-width="0.9"/></svg>
<span class="t" style="left:82.70px;top:281.00px;font-size:11px;line-height:14px;color:#000;letter-spacing:-0.202px;">Coordinate Systems</span>
<div class="r" style="left:39.5px;top:304px;width:14.0px;height:1px;background-image:repeating-linear-gradient(90deg,#9a9a9a 0 1px,transparent 1px 2px);"></div>
<svg class="r" style="left:53px;top:303px;" width="9" height="9" viewBox="0 0 9 9"><path d="M0.8 5.2L3 8L8 1" fill="none" stroke="#0a9a0a" stroke-width="1.7"/></svg>
<svg class="r" style="left:63px;top:296px;" width="16" height="16" viewBox="0 0 16 16"><path d="M1.2 1.5H6.2L7.6 3.4H13V6H1.2z" fill="#dca52a" stroke="#5e4a18" stroke-width="0.9"/><path d="M0.6 5.3H13.6L13 14.5H1.2z" fill="#f6e7a0" stroke="#5e4a18" stroke-width="0.9"/><ellipse cx="7.1" cy="10" rx="3.4" ry="2.4" fill="#e8c860" stroke="#8a6a20" stroke-width="0.8"/><path d="M4.6 10H9.6M7.1 7.8V12.2" stroke="#8a6a20" stroke-width="0.7"/></svg>
<span class="t" style="left:82.70px;top:297.00px;font-size:11px;line-height:14px;color:#000;letter-spacing:-0.215px;">Connections</span>
<div class="r" style="left:44.5px;top:320px;width:9.0px;height:1px;background-image:repeating-linear-gradient(90deg,#9a9a9a 0 1px,transparent 1px 2px);"></div>
<svg class="r" style="left:35.0px;top:315.5px;" width="9" height="9" viewBox="0 0 9 9"><rect x="0.5" y="0.5" width="8" height="8" fill="#fff" stroke="#8c8c8c" stroke-width="1"/><path d="M2 4.5H7" stroke="#000" stroke-width="1"/><path d="M4.5 2V7" stroke="#000" stroke-width="1"/></svg>
<svg class="r" style="left:53px;top:319px;" width="9" height="9" viewBox="0 0 9 9"><path d="M0.8 5.2L3 8L8 1" fill="none" stroke="#0a9a0a" stroke-width="1.7"/></svg>
<svg class="r" style="left:63px;top:312px;" width="16" height="16" viewBox="0 0 16 16"><path d="M0.8 4.5L5.5 1.8L14 5V10L9.5 13L0.8 9.5z" fill="#d4e2f6" stroke="#444a58" stroke-width="0.9"/><path d="M0.8 4.5L9.5 8V13M9.5 8L14 5" fill="none" stroke="#444a58" stroke-width="0.9"/><path d="M5 6.2V11.2M3.2 3.2L11.8 6.6" fill="none" stroke="#8a9ab8" stroke-width="0.7"/></svg>
<span class="t" style="left:82.70px;top:313.00px;font-size:11px;line-height:14px;color:#000;letter-spacing:-0.632px;">Mesh</span>
<div class="r" style="left:44.5px;top:336px;width:9.0px;height:1px;background-image:repeating-linear-gradient(90deg,#9a9a9a 0 1px,transparent 1px 2px);"></div>
<svg class="r" style="left:35.0px;top:331.5px;" width="9" height="9" viewBox="0 0 9 9"><rect x="0.5" y="0.5" width="8" height="8" fill="#fff" stroke="#8c8c8c" stroke-width="1"/><path d="M2 4.5H7" stroke="#000" stroke-width="1"/><path d="M4.5 2V7" stroke="#000" stroke-width="1"/></svg>
<svg class="r" style="left:63px;top:328px;" width="16" height="16" viewBox="0 0 16 16"><rect x="0.5" y="11.5" width="13.5" height="3.5" fill="#fff" stroke="#333" stroke-width="0.9"/><path d="M0.5 13.2H14" stroke="#333" stroke-width="0.6"/><path d="M4.5 3.5L7.5 1L13.8 4V8.5L11 10L4.5 6.5z" fill="#fff" stroke="#333" stroke-width="0.9"/><path d="M4.5 3.5L7.5 1L11 5.5V10L4.5 6.5z" fill="#28b838" stroke="#333" stroke-width="0.8"/><path d="M3.2 3.5C1.2 4.5 0.8 6.5 1.8 8.3" fill="none" stroke="#e03030" stroke-width="1"/><path d="M0.6 7.2L2 9L3.2 7.2" fill="none" stroke="#e03030" stroke-width="0.9"/><path d="M10.5 12.3H12.5" stroke="#d8a020" stroke-width="0.9"/></svg>
<span class="t" style="left:82.70px;top:329.00px;font-size:11px;line-height:14px;color:#000;letter-spacing:-0.351px;">Named Selections</span>
<div class="r" style="left:44.5px;top:352px;width:9.0px;height:1px;background-image:repeating-linear-gradient(90deg,#9a9a9a 0 1px,transparent 1px 2px);"></div>
<svg class="r" style="left:35.0px;top:347.5px;" width="9" height="9" viewBox="0 0 9 9"><rect x="0.5" y="0.5" width="8" height="8" fill="#fff" stroke="#8c8c8c" stroke-width="1"/><path d="M2 4.5H7" stroke="#000" stroke-width="1"/></svg>
<svg class="r" style="left:53px;top:351px;" width="9" height="9" viewBox="0 0 9 9"><path d="M0.8 5.2L3 8L8 1" fill="none" stroke="#0a9a0a" stroke-width="1.7"/></svg>
<svg class="r" style="left:63px;top:344px;" width="16" height="16" viewBox="0 0 16 16"><rect x="0" y="1" width="14" height="14" fill="#6cc02c"/><path d="M2.5 7H11.5M4.3 7.4L3.2 10M7 7.4L5.9 10M9.7 7.4L8.6 10" stroke="#fff" stroke-width="1.1"/></svg>
<span class="t" style="left:82.70px;top:345.00px;font-size:11px;line-height:14px;color:#000;font-weight:bold;letter-spacing:0.552px;">Static Structural (A5)</span>
<div class="r" style="left:66.5px;top:368px;width:14.0px;height:1px;background-image:repeating-linear-gradient(90deg,#9a9a9a 0 1px,transparent 1px 2px);"></div>
<svg class="r" style="left:79.5px;top:367px;" width="9" height="9" viewBox="0 0 9 9"><path d="M0.8 5.2L3 8L8 1" fill="none" stroke="#0a9a0a" stroke-width="1.7"/></svg>
<svg class="r" style="left:89.5px;top:360px;" width="16" height="16" viewBox="0 0 16 16"><path d="M1.5 3.5V13.5M5.5 3.5V13.5M9.5 3.5V13.5M13.5 3.5V13.5M1.5 3.5H13.5M1.5 13.5H13.5" fill="none" stroke="#2a2a2a" stroke-width="0.9"/><path d="M0.5 0.6H3M4.5 0.6H7M8.5 0.6H11M1.7 0.6V3.5M5.7 0.6V3.5M9.7 0.6V3.5" stroke="#1030e0" stroke-width="0.9" fill="none"/><path d="M1 11C4 4.8 11 4.8 14 11" fill="none" stroke="#10c818" stroke-width="1.3"/><path d="M0.3 15.3L1.5 13.6L2.7 15.3zM4.3 15.3L5.5 13.6L6.7 15.3zM8.3 15.3L9.5 13.6L10.7 15.3zM12.3 15.3L13.5 13.6L14.7 15.3z" fill="#e02020"/></svg>
<span class="t" style="left:109.70px;top:361.00px;font-size:11px;line-height:14px;color:#000;letter-spacing:-0.204px;">Analysis Settings</span>
<div class="r" style="left:66.5px;top:384px;width:14.0px;height:1px;background-image:repeating-linear-gradient(90deg,#9a9a9a 0 1px,transparent 1px 2px);"></div>
<svg class="r" style="left:81.0px;top:383.2px;" width="8" height="8" viewBox="0 0 8 8"><path d="M1 1L7 7M7 1L1 7" stroke="#101080" stroke-width="1.4"/></svg>
<svg class="r" style="left:89.5px;top:376px;" width="16" height="16" viewBox="0 0 16 16"><path d="M0.5 4.175L5.25 1.8L10.0 4.175L5.25 6.55z" fill="#fff" stroke="#333" stroke-width="0.8"/><path d="M0.5 4.175L5.25 6.55V11.775L0.5 9.4z" fill="#fff" stroke="#333" stroke-width="0.8"/><path d="M10.0 4.175L5.25 6.55V11.775L10.0 9.4z" fill="#18b018" stroke="#333" stroke-width="0.8"/><path d="M13.8 15.3L10.3 11.8M10.3 11.8L10.2 14M10.3 11.8L12.5 11.9" stroke="#d8a020" stroke-width="1" fill="none"/></svg>
<span class="t" style="left:109.70px;top:377.00px;font-size:11px;line-height:14px;color:#000;letter-spacing:-0.288px;">Pressure</span>
<div class="r" style="left:66.5px;top:400px;width:14.0px;height:1px;background-image:repeating-linear-gradient(90deg,#9a9a9a 0 1px,transparent 1px 2px);"></div>
<svg class="r" style="left:81.0px;top:399.2px;" width="8" height="8" viewBox="0 0 8 8"><path d="M1 1L7 7M7 1L1 7" stroke="#101080" stroke-width="1.4"/></svg>
<svg class="r" style="left:89.5px;top:392px;" width="16" height="16" viewBox="0 0 16 16"><path d="M0.5 3.375L5.25 1L10.0 3.375L5.25 5.75z" fill="#e83030" stroke="#600" stroke-width="0.7"/><path d="M0.5 3.375L5.25 5.75V10.975000000000001L0.5 8.600000000000001z" fill="#d02020" stroke="#600" stroke-width="0.7"/><path d="M10.0 3.375L5.25 5.75V10.975000000000001L10.0 8.600000000000001z" fill="#b01010" stroke="#600" stroke-width="0.7"/><path d="M12.5 2V10.5" stroke="#e02020" stroke-width="2.4" stroke-linecap="round"/><circle cx="12.5" cy="12.3" r="2.6" fill="#e02020"/><path d="M12.5 3.5V9" stroke="#fff" stroke-width="0.7"/></svg>
<span class="t" style="left:109.70px;top:393.00px;font-size:11px;line-height:14px;color:#000;letter-spacing:-0.242px;">Thermal Condition</span>
<div class="r" style="left:66.5px;top:416px;width:14.0px;height:1px;background-image:repeating-linear-gradient(90deg,#9a9a9a 0 1px,transparent 1px 2px);"></div>
<svg class="r" style="left:79.5px;top:415px;" width="9" height="9" viewBox="0 0 9 9"><path d="M0.8 5.2L3 8L8 1" fill="none" stroke="#0a9a0a" stroke-width="1.7"/></svg>
<svg class="r" style="left:89.5px;top:408px;" width="16" height="16" viewBox="0 0 16 16"><path d="M0.5 4.175L5.25 1.8L10.0 4.175L5.25 6.55z" fill="#fff" stroke="#333" stroke-width="0.8"/><path d="M0.5 4.175L5.25 6.55V11.775L0.5 9.4z" fill="#fff" stroke="#333" stroke-width="0.8"/><path d="M10.0 4.175L5.25 6.55V11.775L10.0 9.4z" fill="#30a0e0" stroke="#333" stroke-width="0.8"/><path d="M6 9.5L9.3 7.6" stroke="#e8e040" stroke-width="1.2"/><path d="M6 7.8L9.3 5.9" stroke="#e03030" stroke-width="1"/><path d="M13.8 15.3L10.3 11.8M10.3 11.8L10.2 14M10.3 11.8L12.5 11.9" stroke="#d8a020" stroke-width="1" fill="none"/></svg>
<span class="t" style="left:109.70px;top:409.00px;font-size:11px;line-height:14px;color:#000;letter-spacing:-0.110px;">Hydrostatic Pressure</span>
<div class="r" style="left:66.5px;top:432px;width:14.0px;height:1px;background-image:repeating-linear-gradient(90deg,#9a9a9a 0 1px,transparent 1px 2px);"></div>
<svg class="r" style="left:79.5px;top:431px;" width="9" height="9" viewBox="0 0 9 9"><path d="M0.8 5.2L3 8L8 1" fill="none" stroke="#0a9a0a" stroke-width="1.7"/></svg>
<svg class="r" style="left:89.5px;top:424px;" width="16" height="16" viewBox="0 0 16 16"><path d="M0.5 4.175L5.25 1.8L10.0 4.175L5.25 6.55z" fill="#fff" stroke="#333" stroke-width="0.8"/><path d="M0.5 4.175L5.25 6.55V11.775L0.5 9.4z" fill="#fff" stroke="#333" stroke-width="0.8"/><path d="M10.0 4.175L5.25 6.55V11.775L10.0 9.4z" fill="#2a8ae0" stroke="#333" stroke-width="0.8"/><path d="M14.5 11.5L10 14.5M10 14.5L12.3 14.6M10 14.5L10.8 12.6" stroke="#d8a020" stroke-width="1" fill="none"/></svg>
<span class="t" style="left:109.70px;top:425.00px;font-size:11px;line-height:14px;color:#000;letter-spacing:-0.285px;">Displacement</span>
<div class="r" style="left:66.5px;top:448px;width:14.0px;height:1px;background-image:repeating-linear-gradient(90deg,#9a9a9a 0 1px,transparent 1px 2px);"></div>
<svg class="r" style="left:79.5px;top:447px;" width="9" height="9" viewBox="0 0 9 9"><path d="M0.8 5.2L3 8L8 1" fill="none" stroke="#0a9a0a" stroke-width="1.7"/></svg>
<svg class="r" style="left:89.5px;top:440px;" width="16" height="16" viewBox="0 0 16 16"><path d="M0.5 4.175L5.25 1.8L10.0 4.175L5.25 6.55z" fill="#fff" stroke="#333" stroke-width="0.8"/><path d="M0.5 4.175L5.25 6.55V11.775L0.5 9.4z" fill="#fff" stroke="#333" stroke-width="0.8"/><path d="M10.0 4.175L5.25 6.55V11.775L10.0 9.4z" fill="#2a8ae0" stroke="#333" stroke-width="0.8"/><path d="M14.5 11.5L10 14.5M10 14.5L12.3 14.6M10 14.5L10.8 12.6" stroke="#d8a020" stroke-width="1" fill="none"/></svg>
<span class="t" style="left:109.70px;top:441.00px;font-size:11px;line-height:14px;color:#000;letter-spacing:-0.255px;">Displacement 2</span>
<div class="r" style="left:71.5px;top:464px;width:9.0px;height:1px;background-image:repeating-linear-gradient(90deg,#9a9a9a 0 1px,transparent 1px 2px);"></div>
<svg class="r" style="left:62.0px;top:459.5px;" width="9" height="9" viewBox="0 0 9 9"><rect x="0.5" y="0.5" width="8" height="8" fill="#fff" stroke="#8c8c8c" stroke-width="1"/><path d="M2 4.5H7" stroke="#000" stroke-width="1"/></svg>
<svg class="r" style="left:79.5px;top:463px;" width="9" height="9" viewBox="0 0 9 9"><path d="M0.8 5.2L3 8L8 1" fill="none" stroke="#0a9a0a" stroke-width="1.7"/></svg>
<svg class="r" style="left:89.5px;top:456px;" width="16" height="16" viewBox="0 0 16 16"><path d="M1.2 1.5H6.2L7.6 3.4H13V6H1.2z" fill="#dca52a" stroke="#5e4a18" stroke-width="0.9"/><path d="M0.6 5.3H13.6L13 14.5H1.2z" fill="#f6e7a0" stroke="#5e4a18" stroke-width="0.9"/><path d="M4 8.45L7.3 6.8L10.6 8.45L7.3 10.1z" fill="#50c050" stroke="#334" stroke-width="0.6"/><path d="M4 8.45L7.3 10.1V13.73L4 12.079999999999998z" fill="#e8c020" stroke="#334" stroke-width="0.6"/><path d="M10.6 8.45L7.3 10.1V13.73L10.6 12.079999999999998z" fill="#e04020" stroke="#334" stroke-width="0.6"/><path d="M3.8 8.2L7.2 7" stroke="#30a0e0" stroke-width="1"/></svg>
<span class="t" style="left:109.70px;top:457.00px;font-size:11px;line-height:14px;color:#000;font-weight:bold;letter-spacing:0.423px;">Solution (A6)</span>
<div class="r" style="left:93.5px;top:480px;width:14.0px;height:1px;background-image:repeating-linear-gradient(90deg,#9a9a9a 0 1px,transparent 1px 2px);"></div>
<svg class="r" style="left:106.5px;top:479px;" width="9" height="9" viewBox="0 0 9 9"><path d="M0.8 5.2L3 8L8 1" fill="none" stroke="#0a9a0a" stroke-width="1.7"/></svg>
<svg class="r" style="left:116.5px;top:472px;" width="16" height="16" viewBox="0 0 16 16"><path d="M1.2 1.5H6.2L7.6 3.4H13V6H1.2z" fill="#dca52a" stroke="#5e4a18" stroke-width="0.9"/><path d="M0.6 5.3H13.6L13 14.5H1.2z" fill="#f6e7a0" stroke="#5e4a18" stroke-width="0.9"/><text x="7.1" y="13.3" font-family="Liberation Serif" font-weight="bold" font-size="8.5" fill="#2a62d8" text-anchor="middle">i</text></svg>
<span class="t" style="left:136.30px;top:473.00px;font-size:11px;line-height:14px;color:#000;letter-spacing:-0.070px;">Solution Information</span>
<div class="r" style="left:93.5px;top:496px;width:14.0px;height:1px;background-image:repeating-linear-gradient(90deg,#9a9a9a 0 1px,transparent 1px 2px);"></div>
<svg class="r" style="left:106.5px;top:495px;" width="9" height="9" viewBox="0 0 9 9"><path d="M0.8 5.2L3 8L8 1" fill="none" stroke="#0a9a0a" stroke-width="1.7"/></svg>
<svg class="r" style="left:116.5px;top:488px;" width="16" height="16" viewBox="0 0 16 16"><path d="M0.2 4.1L3.8000000000000003 2.3L7.4 4.1L3.8000000000000003 5.9z" fill="#38d0f0" stroke="#3a4458" stroke-width="0.7"/><path d="M0.2 4.1L3.8000000000000003 5.9V9.860000000000001L0.2 8.06z" fill="#2060e8" stroke="#3a4458" stroke-width="0.7"/><path d="M7.4 4.1L3.8000000000000003 5.9V9.860000000000001L7.4 8.06z" fill="#30a8e8" stroke="#3a4458" stroke-width="0.7"/><path d="M5.3 5.449999999999999L9.6 3.3L13.899999999999999 5.449999999999999L9.6 7.6z" fill="#60e050" stroke="#3a4458" stroke-width="0.7"/><path d="M5.3 5.449999999999999L9.6 7.6V12.33L5.3 10.18z" fill="#f0e828" stroke="#3a4458" stroke-width="0.7"/><path d="M13.899999999999999 5.449999999999999L9.6 7.6V12.33L13.899999999999999 10.18z" fill="#f05a20" stroke="#3a4458" stroke-width="0.7"/><path d="M5.3 7.2L9.6 9.4" stroke="#a0e030" stroke-width="0.9"/></svg>
<span class="t" style="left:136.30px;top:489.00px;font-size:11px;line-height:14px;color:#000;letter-spacing:-0.013px;">Total Deformation</span>
<div class="r" style="left:93.5px;top:512px;width:14.0px;height:1px;background-image:repeating-linear-gradient(90deg,#9a9a9a 0 1px,transparent 1px 2px);"></div>
<svg class="r" style="left:106.5px;top:511px;" width="9" height="9" viewBox="0 0 9 9"><path d="M0.8 5.2L3 8L8 1" fill="none" stroke="#0a9a0a" stroke-width="1.7"/></svg>
<svg class="r" style="left:116.5px;top:504px;" width="16" height="16" viewBox="0 0 16 16"><path d="M0.2 4.1L3.8000000000000003 2.3L7.4 4.1L3.8000000000000003 5.9z" fill="#38d0f0" stroke="#3a4458" stroke-width="0.7"/><path d="M0.2 4.1L3.8000000000000003 5.9V9.860000000000001L0.2 8.06z" fill="#2060e8" stroke="#3a4458" stroke-width="0.7"/><path d="M7.4 4.1L3.8000000000000003 5.9V9.860000000000001L7.4 8.06z" fill="#30a8e8" stroke="#3a4458" stroke-width="0.7"/><path d="M5.3 5.449999999999999L9.6 3.3L13.899999999999999 5.449999999999999L9.6 7.6z" fill="#60e050" stroke="#3a4458" stroke-width="0.7"/><path d="M5.3 5.449999999999999L9.6 7.6V12.33L5.3 10.18z" fill="#f0e828" stroke="#3a4458" stroke-width="0.7"/><path d="M13.899999999999999 5.449999999999999L9.6 7.6V12.33L13.899999999999999 10.18z" fill="#f05a20" stroke="#3a4458" stroke-width="0.7"/><path d="M5.3 7.2L9.6 9.4" stroke="#a0e030" stroke-width="0.9"/></svg>
<span class="t" style="left:136.30px;top:505.00px;font-size:11px;line-height:14px;color:#000;letter-spacing:-0.162px;">Equivalent Stress</span>
<div class="r" style="left:93.5px;top:528px;width:14.0px;height:1px;background-image:repeating-linear-gradient(90deg,#9a9a9a 0 1px,transparent 1px 2px);"></div>
<svg class="r" style="left:106.5px;top:527px;" width="9" height="9" viewBox="0 0 9 9"><path d="M0.8 5.2L3 8L8 1" fill="none" stroke="#0a9a0a" stroke-width="1.7"/></svg>
<svg class="r" style="left:116.5px;top:520px;" width="16" height="16" viewBox="0 0 16 16"><path d="M0.2 4.1L3.8000000000000003 2.3L7.4 4.1L3.8000000000000003 5.9z" fill="#38d0f0" stroke="#3a4458" stroke-width="0.7"/><path d="M0.2 4.1L3.8000000000000003 5.9V9.860000000000001L0.2 8.06z" fill="#2060e8" stroke="#3a4458" stroke-width="0.7"/><path d="M7.4 4.1L3.8000000000000003 5.9V9.860000000000001L7.4 8.06z" fill="#30a8e8" stroke="#3a4458" stroke-width="0.7"/><path d="M5.3 5.449999999999999L9.6 3.3L13.899999999999999 5.449999999999999L9.6 7.6z" fill="#60e050" stroke="#3a4458" stroke-width="0.7"/><path d="M5.3 5.449999999999999L9.6 7.6V12.33L5.3 10.18z" fill="#f0e828" stroke="#3a4458" stroke-width="0.7"/><path d="M13.899999999999999 5.449999999999999L9.6 7.6V12.33L13.899999999999999 10.18z" fill="#f05a20" stroke="#3a4458" stroke-width="0.7"/><path d="M5.3 7.2L9.6 9.4" stroke="#a0e030" stroke-width="0.9"/></svg>
<span class="t" style="left:136.30px;top:521.00px;font-size:11px;line-height:14px;color:#000;letter-spacing:-0.306px;">Normal Stress</span>
<div class="r" style="left:44.5px;top:544px;width:9.0px;height:1px;background-image:repeating-linear-gradient(90deg,#9a9a9a 0 1px,transparent 1px 2px);"></div>
<svg class="r" style="left:35.0px;top:539.5px;" width="9" height="9" viewBox="0 0 9 9"><rect x="0.5" y="0.5" width="8" height="8" fill="#fff" stroke="#8c8c8c" stroke-width="1"/><path d="M2 4.5H7" stroke="#000" stroke-width="1"/></svg>
<svg class="r" style="left:53px;top:543px;" width="9" height="9" viewBox="0 0 9 9"><path d="M0.8 5.2L3 8L8 1" fill="none" stroke="#0a9a0a" stroke-width="1.7"/></svg>
<svg class="r" style="left:63px;top:536px;" width="16" height="16" viewBox="0 0 16 16"><rect x="0" y="1" width="14" height="14" fill="#6cc02c"/><path d="M6 3.2C9.8 6 9.8 10 6 12.8" fill="none" stroke="#fff" stroke-width="1.2"/><path d="M6 3.2V12.8" stroke="#d8f0c0" stroke-width="0.8"/></svg>
<span class="t" style="left:82.70px;top:537.00px;font-size:11px;line-height:14px;color:#000;font-weight:bold;letter-spacing:0.260px;">Eigenvalue Buckling (B5)</span>
<div class="r" style="left:66.5px;top:560px;width:14.0px;height:1px;background-image:repeating-linear-gradient(90deg,#9a9a9a 0 1px,transparent 1px 2px);"></div>
<svg class="r" style="left:79.5px;top:559px;" width="9" height="9" viewBox="0 0 9 9"><path d="M0.8 5.2L3 8L8 1" fill="none" stroke="#0a9a0a" stroke-width="1.7"/></svg>
<svg class="r" style="left:89.5px;top:552px;" width="16" height="16" viewBox="0 0 16 16"><path d="M1 2.5H14" stroke="#d8a020" stroke-width="1.1"/><path d="M11.5 0.3L15 2.5L11.5 4.7z" fill="#d8a020"/><text x="8" y="14.5" font-family="Liberation Sans" font-weight="bold" font-size="9" fill="#444" text-anchor="middle" letter-spacing="-0.4">T=0</text></svg>
<span class="t" style="left:109.70px;top:553.00px;font-size:11px;line-height:14px;color:#000;letter-spacing:-0.068px;">Pre-Stress (Static Structural)</span>
<div class="r" style="left:66.5px;top:576px;width:14.0px;height:1px;background-image:repeating-linear-gradient(90deg,#9a9a9a 0 1px,transparent 1px 2px);"></div>
<svg class="r" style="left:79.5px;top:575px;" width="9" height="9" viewBox="0 0 9 9"><path d="M0.8 5.2L3 8L8 1" fill="none" stroke="#0a9a0a" stroke-width="1.7"/></svg>
<svg class="r" style="left:89.5px;top:568px;" width="16" height="16" viewBox="0 0 16 16"><path d="M1.5 3.5V13.5M5.5 3.5V13.5M9.5 3.5V13.5M13.5 3.5V13.5M1.5 3.5H13.5M1.5 13.5H13.5" fill="none" stroke="#2a2a2a" stroke-width="0.9"/><path d="M0.5 0.6H3M4.5 0.6H7M8.5 0.6H11M1.7 0.6V3.5M5.7 0.6V3.5M9.7 0.6V3.5" stroke="#1030e0" stroke-width="0.9" fill="none"/><path d="M1 11C4 4.8 11 4.8 14 11" fill="none" stroke="#10c818" stroke-width="1.3"/><path d="M0.3 15.3L1.5 13.6L2.7 15.3zM4.3 15.3L5.5 13.6L6.7 15.3zM8.3 15.3L9.5 13.6L10.7 15.3zM12.3 15.3L13.5 13.6L14.7 15.3z" fill="#e02020"/></svg>
<span class="t" style="left:109.70px;top:569.00px;font-size:11px;line-height:14px;color:#000;letter-spacing:-0.204px;">Analysis Settings</span>
<div class="r" style="left:66.5px;top:592px;width:14.0px;height:1px;background-image:repeating-linear-gradient(90deg,#9a9a9a 0 1px,transparent 1px 2px);"></div>
<svg class="r" style="left:79.5px;top:591px;" width="9" height="9" viewBox="0 0 9 9"><path d="M0.8 5.2L3 8L8 1" fill="none" stroke="#0a9a0a" stroke-width="1.7"/></svg>
<svg class="r" style="left:89.5px;top:584px;" width="16" height="16" viewBox="0 0 16 16"><path d="M0.5 3.375L5.25 1L10.0 3.375L5.25 5.75z" fill="#e83030" stroke="#600" stroke-width="0.7"/><path d="M0.5 3.375L5.25 5.75V10.975000000000001L0.5 8.600000000000001z" fill="#d02020" stroke="#600" stroke-width="0.7"/><path d="M10.0 3.375L5.25 5.75V10.975000000000001L10.0 8.600000000000001z" fill="#b01010" stroke="#600" stroke-width="0.7"/><path d="M12.5 2V10.5" stroke="#e02020" stroke-width="2.4" stroke-linecap="round"/><circle cx="12.5" cy="12.3" r="2.6" fill="#e02020"/><path d="M12.5 3.5V9" stroke="#fff" stroke-width="0.7"/></svg>
<span class="t" style="left:109.70px;top:585.00px;font-size:11px;line-height:14px;color:#000;letter-spacing:-0.242px;">Thermal Condition</span>
<div class="r" style="left:66.5px;top:608px;width:14.0px;height:1px;background-image:repeating-linear-gradient(90deg,#9a9a9a 0 1px,transparent 1px 2px);"></div>
<svg class="r" style="left:79.5px;top:607px;" width="9" height="9" viewBox="0 0 9 9"><path d="M0.8 5.2L3 8L8 1" fill="none" stroke="#0a9a0a" stroke-width="1.7"/></svg>
<svg class="r" style="left:89.5px;top:600px;" width="16" height="16" viewBox="0 0 16 16"><path d="M0.5 4.175L5.25 1.8L10.0 4.175L5.25 6.55z" fill="#c8d8f0" stroke="#556" stroke-width="0.8"/><path d="M0.5 4.175L5.25 6.55V11.775L0.5 9.4z" fill="#9ab4e0" stroke="#556" stroke-width="0.8"/><path d="M10.0 4.175L5.25 6.55V11.775L10.0 9.4z" fill="#7a9ad8" stroke="#556" stroke-width="0.8"/><path d="M3 5.9L7.5 8.1M5.3 4.7V10.8" stroke="#e8eefa" stroke-width="0.6"/><path d="M13.8 15.3L10.3 11.8M10.3 11.8L10.2 14M10.3 11.8L12.5 11.9" stroke="#d8a020" stroke-width="1" fill="none"/></svg>
<span class="t" style="left:109.70px;top:601.00px;font-size:11px;line-height:14px;color:#000;letter-spacing:-0.293px;">Nodal Pressure</span>
<div class="r" style="left:71.5px;top:624px;width:9.0px;height:1px;background-image:repeating-linear-gradient(90deg,#9a9a9a 0 1px,transparent 1px 2px);"></div>
<svg class="r" style="left:62.0px;top:619.5px;" width="9" height="9" viewBox="0 0 9 9"><rect x="0.5" y="0.5" width="8" height="8" fill="#fff" stroke="#8c8c8c" stroke-width="1"/><path d="M2 4.5H7" stroke="#000" stroke-width="1"/></svg>
<svg class="r" style="left:79.5px;top:623px;" width="9" height="9" viewBox="0 0 9 9"><path d="M0.8 5.2L3 8L8 1" fill="none" stroke="#0a9a0a" stroke-width="1.7"/></svg>
<svg class="r" style="left:89.5px;top:616px;" width="16" height="16" viewBox="0 0 16 16"><path d="M1.2 1.5H6.2L7.6 3.4H13V6H1.2z" fill="#dca52a" stroke="#5e4a18" stroke-width="0.9"/><path d="M0.6 5.3H13.6L13 14.5H1.2z" fill="#f6e7a0" stroke="#5e4a18" stroke-width="0.9"/><path d="M4 8.45L7.3 6.8L10.6 8.45L7.3 10.1z" fill="#50c050" stroke="#334" stroke-width="0.6"/><path d="M4 8.45L7.3 10.1V13.73L4 12.079999999999998z" fill="#e8c020" stroke="#334" stroke-width="0.6"/><path d="M10.6 8.45L7.3 10.1V13.73L10.6 12.079999999999998z" fill="#e04020" stroke="#334" stroke-width="0.6"/><path d="M3.8 8.2L7.2 7" stroke="#30a0e0" stroke-width="1"/></svg>
<span class="t" style="left:109.70px;top:617.00px;font-size:11px;line-height:14px;color:#000;font-weight:bold;letter-spacing:0.381px;">Solution (B6)</span>
<div class="r" style="left:93.5px;top:640px;width:14.0px;height:1px;background-image:repeating-linear-gradient(90deg,#9a9a9a 0 1px,transparent 1px 2px);"></div>
<svg class="r" style="left:106.5px;top:639px;" width="9" height="9" viewBox="0 0 9 9"><path d="M0.8 5.2L3 8L8 1" fill="none" stroke="#0a9a0a" stroke-width="1.7"/></svg>
<svg class="r" style="left:116.5px;top:632px;" width="16" height="16" viewBox="0 0 16 16"><path d="M1.2 1.5H6.2L7.6 3.4H13V6H1.2z" fill="#dca52a" stroke="#5e4a18" stroke-width="0.9"/><path d="M0.6 5.3H13.6L13 14.5H1.2z" fill="#f6e7a0" stroke="#5e4a18" stroke-width="0.9"/><text x="7.1" y="13.3" font-family="Liberation Serif" font-weight="bold" font-size="8.5" fill="#2a62d8" text-anchor="middle">i</text></svg>
<span class="t" style="left:136.30px;top:633.00px;font-size:11px;line-height:14px;color:#000;letter-spacing:-0.070px;">Solution Information</span>
<div class="r" style="left:93.5px;top:656px;width:14.0px;height:1px;background-image:repeating-linear-gradient(90deg,#9a9a9a 0 1px,transparent 1px 2px);"></div>
<svg class="r" style="left:106.5px;top:655px;" width="9" height="9" viewBox="0 0 9 9"><path d="M0.8 5.2L3 8L8 1" fill="none" stroke="#0a9a0a" stroke-width="1.7"/></svg>
<div class="r" style="left:135.0px;top:648px;width:90px;height:16px;background:#ececec;"></div>
<svg class="r" style="left:116.5px;top:648px;" width="16" height="16" viewBox="0 0 16 16"><path d="M0.2 4.1L3.8000000000000003 2.3L7.4 4.1L3.8000000000000003 5.9z" fill="#38d0f0" stroke="#3a4458" stroke-width="0.7"/><path d="M0.2 4.1L3.8000000000000003 5.9V9.860000000000001L0.2 8.06z" fill="#2060e8" stroke="#3a4458" stroke-width="0.7"/><path d="M7.4 4.1L3.8000000000000003 5.9V9.860000000000001L7.4 8.06z" fill="#30a8e8" stroke="#3a4458" stroke-width="0.7"/><path d="M5.3 5.449999999999999L9.6 3.3L13.899999999999999 5.449999999999999L9.6 7.6z" fill="#60e050" stroke="#3a4458" stroke-width="0.7"/><path d="M5.3 5.449999999999999L9.6 7.6V12.33L5.3 10.18z" fill="#f0e828" stroke="#3a4458" stroke-width="0.7"/><path d="M13.899999999999999 5.449999999999999L9.6 7.6V12.33L13.899999999999999 10.18z" fill="#f05a20" stroke="#3a4458" stroke-width="0.7"/><path d="M5.3 7.2L9.6 9.4" stroke="#a0e030" stroke-width="0.9"/></svg>
<span class="t" style="left:136.30px;top:649.00px;font-size:11px;line-height:14px;color:#000;letter-spacing:-0.013px;">Total Deformation</span>
<div class="r" style="left:93.5px;top:672px;width:14.0px;height:1px;background-image:repeating-linear-gradient(90deg,#9a9a9a 0 1px,transparent 1px 2px);"></div>
<svg class="r" style="left:106.5px;top:671px;" width="9" height="9" viewBox="0 0 9 9"><path d="M0.8 5.2L3 8L8 1" fill="none" stroke="#0a9a0a" stroke-width="1.7"/></svg>
<svg class="r" style="left:116.5px;top:664px;" width="16" height="16" viewBox="0 0 16 16"><path d="M0.2 4.1L3.8000000000000003 2.3L7.4 4.1L3.8000000000000003 5.9z" fill="#38d0f0" stroke="#3a4458" stroke-width="0.7"/><path d="M0.2 4.1L3.8000000000000003 5.9V9.860000000000001L0.2 8.06z" fill="#2060e8" stroke="#3a4458" stroke-width="0.7"/><path d="M7.4 4.1L3.8000000000000003 5.9V9.860000000000001L7.4 8.06z" fill="#30a8e8" stroke="#3a4458" stroke-width="0.7"/><path d="M5.3 5.449999999999999L9.6 3.3L13.899999999999999 5.449999999999999L9.6 7.6z" fill="#60e050" stroke="#3a4458" stroke-width="0.7"/><path d="M5.3 5.449999999999999L9.6 7.6V12.33L5.3 10.18z" fill="#f0e828" stroke="#3a4458" stroke-width="0.7"/><path d="M13.899999999999999 5.449999999999999L9.6 7.6V12.33L13.899999999999999 10.18z" fill="#f05a20" stroke="#3a4458" stroke-width="0.7"/><path d="M5.3 7.2L9.6 9.4" stroke="#a0e030" stroke-width="0.9"/></svg>
<span class="t" style="left:136.30px;top:665.00px;font-size:11px;line-height:14px;color:#000;letter-spacing:0.007px;">Total Deformation 2</span>
<div class="r" style="left:93.5px;top:688px;width:14.0px;height:1px;background-image:repeating-linear-gradient(90deg,#9a9a9a 0 1px,transparent 1px 2px);"></div>
<svg class="r" style="left:106.5px;top:687px;" width="9" height="9" viewBox="0 0 9 9"><path d="M0.8 5.2L3 8L8 1" fill="none" stroke="#0a9a0a" stroke-width="1.7"/></svg>
<svg class="r" style="left:116.5px;top:680px;" width="16" height="16" viewBox="0 0 16 16"><path d="M0.2 4.1L3.8000000000000003 2.3L7.4 4.1L3.8000000000000003 5.9z" fill="#38d0f0" stroke="#3a4458" stroke-width="0.7"/><path d="M0.2 4.1L3.8000000000000003 5.9V9.860000000000001L0.2 8.06z" fill="#2060e8" stroke="#3a4458" stroke-width="0.7"/><path d="M7.4 4.1L3.8000000000000003 5.9V9.860000000000001L7.4 8.06z" fill="#30a8e8" stroke="#3a4458" stroke-width="0.7"/><path d="M5.3 5.449999999999999L9.6 3.3L13.899999999999999 5.449999999999999L9.6 7.6z" fill="#60e050" stroke="#3a4458" stroke-width="0.7"/><path d="M5.3 5.449999999999999L9.6 7.6V12.33L5.3 10.18z" fill="#f0e828" stroke="#3a4458" stroke-width="0.7"/><path d="M13.899999999999999 5.449999999999999L9.6 7.6V12.33L13.899999999999999 10.18z" fill="#f05a20" stroke="#3a4458" stroke-width="0.7"/><path d="M5.3 7.2L9.6 9.4" stroke="#a0e030" stroke-width="0.9"/></svg>
<span class="t" style="left:136.30px;top:681.00px;font-size:11px;line-height:14px;color:#000;letter-spacing:0.007px;">Total Deformation 3</span>
<div class="r" style="left:93.5px;top:704px;width:14.0px;height:1px;background-image:repeating-linear-gradient(90deg,#9a9a9a 0 1px,transparent 1px 2px);"></div>
<svg class="r" style="left:106.5px;top:703px;" width="9" height="9" viewBox="0 0 9 9"><path d="M0.8 5.2L3 8L8 1" fill="none" stroke="#0a9a0a" stroke-width="1.7"/></svg>
<svg class="r" style="left:116.5px;top:696px;" width="16" height="16" viewBox="0 0 16 16"><path d="M0.2 4.1L3.8000000000000003 2.3L7.4 4.1L3.8000000000000003 5.9z" fill="#38d0f0" stroke="#3a4458" stroke-width="0.7"/><path d="M0.2 4.1L3.8000000000000003 5.9V9.860000000000001L0.2 8.06z" fill="#2060e8" stroke="#3a4458" stroke-width="0.7"/><path d="M7.4 4.1L3.8000000000000003 5.9V9.860000000000001L7.4 8.06z" fill="#30a8e8" stroke="#3a4458" stroke-width="0.7"/><path d="M5.3 5.449999999999999L9.6 3.3L13.899999999999999 5.449999999999999L9.6 7.6z" fill="#60e050" stroke="#3a4458" stroke-width="0.7"/><path d="M5.3 5.449999999999999L9.6 7.6V12.33L5.3 10.18z" fill="#f0e828" stroke="#3a4458" stroke-width="0.7"/><path d="M13.899999999999999 5.449999999999999L9.6 7.6V12.33L13.899999999999999 10.18z" fill="#f05a20" stroke="#3a4458" stroke-width="0.7"/><path d="M5.3 7.2L9.6 9.4" stroke="#a0e030" stroke-width="0.9"/></svg>
<span class="t" style="left:136.30px;top:697.00px;font-size:11px;line-height:14px;color:#000;letter-spacing:0.007px;">Total Deformation 4</span>
<div class="r" style="left:93.5px;top:720px;width:14.0px;height:1px;background-image:repeating-linear-gradient(90deg,#9a9a9a 0 1px,transparent 1px 2px);"></div>
<svg class="r" style="left:106.5px;top:719px;" width="9" height="9" viewBox="0 0 9 9"><path d="M0.8 5.2L3 8L8 1" fill="none" stroke="#0a9a0a" stroke-width="1.7"/></svg>
<svg class="r" style="left:116.5px;top:712px;" width="16" height="16" viewBox="0 0 16 16"><path d="M0.2 4.1L3.8000000000000003 2.3L7.4 4.1L3.8000000000000003 5.9z" fill="#38d0f0" stroke="#3a4458" stroke-width="0.7"/><path d="M0.2 4.1L3.8000000000000003 5.9V9.860000000000001L0.2 8.06z" fill="#2060e8" stroke="#3a4458" stroke-width="0.7"/><path d="M7.4 4.1L3.8000000000000003 5.9V9.860000000000001L7.4 8.06z" fill="#30a8e8" stroke="#3a4458" stroke-width="0.7"/><path d="M5.3 5.449999999999999L9.6 3.3L13.899999999999999 5.449999999999999L9.6 7.6z" fill="#60e050" stroke="#3a4458" stroke-width="0.7"/><path d="M5.3 5.449999999999999L9.6 7.6V12.33L5.3 10.18z" fill="#f0e828" stroke="#3a4458" stroke-width="0.7"/><path d="M13.899999999999999 5.449999999999999L9.6 7.6V12.33L13.899999999999999 10.18z" fill="#f05a20" stroke="#3a4458" stroke-width="0.7"/><path d="M5.3 7.2L9.6 9.4" stroke="#a0e030" stroke-width="0.9"/></svg>
<span class="t" style="left:136.30px;top:713.00px;font-size:11px;line-height:14px;color:#000;letter-spacing:0.007px;">Total Deformation 5</span>
<div class="r" style="left:0px;top:777px;width:527px;height:5px;background:#eeeef2;"></div>
<div class="r" style="left:0px;top:781px;width:527px;height:1px;background:#d0d0dc;"></div>
<div class="r" style="left:0px;top:782px;width:527px;height:230px;background:#eeeef2;"></div>
<div class="r" style="left:0px;top:782px;width:1px;height:19px;background:#d0d0dc;"></div>
<span class="t" style="left:5.50px;top:784.30px;font-size:11.5px;line-height:14px;color:#444;letter-spacing:0.227px;">Details of "Total Deformation"</span>
<svg class="r" style="left:167px;top:788px;" width="290" height="6" viewBox="0 0 290 6"><defs><pattern id="gp167_788" width="4" height="4" patternUnits="userSpaceOnUse"><rect x="0" y="0" width="1" height="1" fill="#9a9aa6"/><rect x="2" y="2" width="1" height="1" fill="#9a9aa6"/></pattern></defs><rect width="290" height="6" fill="url(#gp167_788)"/></svg>
<svg class="r" style="left:460.3px;top:789px;" width="8" height="5" viewBox="0 0 8 5"><path d="M0 0H8L4 4.5z" fill="#1e1e1e"/></svg>
<svg class="r" style="left:475.3px;top:785px;" width="10" height="12" viewBox="0 0 10 12"><path d="M3 0.5H7V6.5H3zM6 0.5V6.5" fill="none" stroke="#1e1e1e" stroke-width="1.1"/><path d="M1 7H9M5 7V12" stroke="#1e1e1e" stroke-width="1.2"/></svg>
<svg class="r" style="left:491.3px;top:786px;" width="11" height="10" viewBox="0 0 11 10"><rect x="0.6" y="0.6" width="9.8" height="8.8" fill="none" stroke="#1e1e1e" stroke-width="1.2"/><path d="M0 1H11" stroke="#1e1e1e" stroke-width="2"/></svg>
<svg class="r" style="left:508.3px;top:786px;" width="10" height="10" viewBox="0 0 10 10"><path d="M1 1L9 9M9 1L1 9" stroke="#1e1e1e" stroke-width="1.6"/></svg>
<div class="r" style="left:0px;top:801px;width:509px;height:211px;background:#fff;"></div>
<div class="r" style="left:509px;top:801px;width:18px;height:211px;background:#f0f0f0;"></div>
<div class="r" style="left:13px;top:801px;width:496px;height:211px;background:#fff;"></div>
<svg class="r" style="left:2px;top:806px;" width="9" height="9" viewBox="0 0 9 9"><rect x="0.5" y="0.5" width="8" height="8" fill="#fff" stroke="#8c8c8c"/><path d="M2 4.5H7" stroke="#000"/></svg>
<span class="t" style="left:17.20px;top:803.00px;font-size:11.5px;line-height:14px;color:#000;font-weight:bold;letter-spacing:-0.927px;">Scope</span>
<div class="r" style="left:13px;top:801px;width:496px;height:1px;background:#a0a0a0;"></div>
<div class="r" style="left:127px;top:819px;width:382px;height:18px;background:#e8e6e2;"></div>
<span class="t" style="left:17.20px;top:821.00px;font-size:11.5px;line-height:14px;color:#000;letter-spacing:0.177px;">Scoping Method</span>
<span class="t" style="left:131.30px;top:821.00px;font-size:11.5px;line-height:14px;color:#000;letter-spacing:-0.152px;">Geometry Selection</span>
<div class="r" style="left:127px;top:819px;width:1px;height:18px;background:#a0a0a0;"></div>
<div class="r" style="left:13px;top:819px;width:496px;height:1px;background:#a0a0a0;"></div>
<div class="r" style="left:127px;top:837px;width:382px;height:18px;background:#e8e6e2;"></div>
<span class="t" style="left:17.20px;top:839.00px;font-size:11.5px;line-height:14px;color:#000;letter-spacing:-0.212px;">Geometry</span>
<span class="t" style="left:131.30px;top:839.00px;font-size:11.5px;line-height:14px;color:#000;letter-spacing:-0.126px;">All Bodies</span>
<div class="r" style="left:127px;top:837px;width:1px;height:18px;background:#a0a0a0;"></div>
<div class="r" style="left:13px;top:837px;width:496px;height:1px;background:#a0a0a0;"></div>
<svg class="r" style="left:2px;top:860px;" width="9" height="9" viewBox="0 0 9 9"><rect x="0.5" y="0.5" width="8" height="8" fill="#fff" stroke="#8c8c8c"/><path d="M2 4.5H7" stroke="#000"/></svg>
<span class="t" style="left:17.20px;top:857.00px;font-size:11.5px;line-height:14px;color:#000;font-weight:bold;letter-spacing:-0.113px;">Definition</span>
<div class="r" style="left:13px;top:855px;width:496px;height:1px;background:#a0a0a0;"></div>
<span class="t" style="left:17.20px;top:875.00px;font-size:11.5px;line-height:14px;color:#000;letter-spacing:-0.777px;">Type</span>
<span class="t" style="left:131.30px;top:875.00px;font-size:11.5px;line-height:14px;color:#000;letter-spacing:0.243px;">Total Deformation</span>
<div class="r" style="left:127px;top:873px;width:1px;height:18px;background:#a0a0a0;"></div>
<div class="r" style="left:13px;top:873px;width:496px;height:1px;background:#a0a0a0;"></div>
<span class="t" style="left:17.20px;top:893.00px;font-size:11.5px;line-height:14px;color:#000;letter-spacing:0.412px;">Mode</span>
<span class="t" style="left:131.30px;top:893.00px;font-size:11.5px;line-height:14px;color:#000;letter-spacing:-1.200px;">1.</span>
<div class="r" style="left:127px;top:891px;width:1px;height:18px;background:#a0a0a0;"></div>
<div class="r" style="left:13px;top:891px;width:496px;height:1px;background:#a0a0a0;"></div>
<span class="t" style="left:17.20px;top:911.00px;font-size:11.5px;line-height:14px;color:#000;letter-spacing:0.322px;">Identifier</span>
<div class="r" style="left:127px;top:909px;width:1px;height:18px;background:#a0a0a0;"></div>
<div class="r" style="left:13px;top:909px;width:496px;height:1px;background:#a0a0a0;"></div>
<span class="t" style="left:17.20px;top:929.00px;font-size:11.5px;line-height:14px;color:#000;letter-spacing:-0.152px;">Suppressed</span>
<span class="t" style="left:131.30px;top:929.00px;font-size:11.5px;line-height:14px;color:#000;letter-spacing:0.300px;">No</span>
<div class="r" style="left:127px;top:927px;width:1px;height:18px;background:#a0a0a0;"></div>
<div class="r" style="left:13px;top:927px;width:496px;height:1px;background:#a0a0a0;"></div>
<svg class="r" style="left:2px;top:950px;" width="9" height="9" viewBox="0 0 9 9"><rect x="0.5" y="0.5" width="8" height="8" fill="#fff" stroke="#8c8c8c"/><path d="M2 4.5H7" stroke="#000"/></svg>
<span class="t" style="left:17.20px;top:947.00px;font-size:11.5px;line-height:14px;color:#000;font-weight:bold;letter-spacing:-0.756px;">Results</span>
<div class="r" style="left:13px;top:945px;width:496px;height:1px;background:#a0a0a0;"></div>
<div class="r" style="left:127px;top:963px;width:382px;height:18px;background:#e8e6e2;"></div>
<div class="r" style="left:17px;top:966px;width:12px;height:12px;background:#fff;border:1px solid #c8c8c8;box-sizing:border-box;"></div>
<span class="t" style="left:33.00px;top:965.00px;font-size:11.5px;line-height:14px;color:#000;letter-spacing:0.230px;">Load Multiplier</span>
<span class="t" style="left:131.30px;top:965.00px;font-size:11.5px;line-height:14px;color:#000;letter-spacing:-0.358px;">3.8853e-002</span>
<div class="r" style="left:127px;top:963px;width:1px;height:18px;background:#a0a0a0;"></div>
<div class="r" style="left:13px;top:963px;width:496px;height:1px;background:#a0a0a0;"></div>
<div class="r" style="left:127px;top:981px;width:382px;height:18px;background:#e8e6e2;"></div>
<div class="r" style="left:17px;top:984px;width:12px;height:12px;background:#fff;border:1px solid #c8c8c8;box-sizing:border-box;"></div>
<span class="t" style="left:33.00px;top:983.00px;font-size:11.5px;line-height:14px;color:#000;letter-spacing:0.227px;">Minimum</span>
<span class="t" style="left:131.30px;top:983.00px;font-size:11.5px;line-height:14px;color:#000;letter-spacing:-0.455px;">0. m</span>
<div class="r" style="left:127px;top:981px;width:1px;height:18px;background:#a0a0a0;"></div>
<div class="r" style="left:13px;top:981px;width:496px;height:1px;background:#a0a0a0;"></div>
<div class="r" style="left:127px;top:999px;width:382px;height:18px;background:#e8e6e2;"></div>
<div class="r" style="left:17px;top:1002px;width:12px;height:12px;background:#fff;border:1px solid #c8c8c8;box-sizing:border-box;"></div>
<span class="t" style="left:33.00px;top:1001.00px;font-size:11.5px;line-height:14px;color:#000;letter-spacing:-0.222px;">Maximum</span>
<span class="t" style="left:131.30px;top:1001.00px;font-size:11.5px;line-height:14px;color:#000;letter-spacing:-0.455px;">1. m</span>
<div class="r" style="left:127px;top:999px;width:1px;height:18px;background:#a0a0a0;"></div>
<div class="r" style="left:13px;top:999px;width:496px;height:1px;background:#a0a0a0;"></div>
<div class="r" style="left:13px;top:801px;width:1px;height:211px;background:#a0a0a0;"></div>
<div class="r" style="left:508px;top:801px;width:1px;height:211px;background:#a0a0a0;"></div>
<div class="r" style="left:517px;top:818px;width:2px;height:130px;background:#808080;"></div>
<div class="r" style="left:527px;top:138px;width:1393px;height:25px;background:#eeeef2;"></div>
<div class="r" style="left:527px;top:138px;width:3px;height:700px;background:#eeeef2;"></div>
<svg class="r" style="left:542px;top:141px;" width="4" height="18" viewBox="0 0 4 18"><defs><pattern id="gt" width="4" height="4" patternUnits="userSpaceOnUse"><rect width="1" height="1" fill="#9a9aa6"/><rect x="2" y="2" width="1" height="1" fill="#9a9aa6"/></pattern></defs><rect width="4" height="18" fill="url(#gt)"/></svg>
<svg class="r" style="left:557.0px;top:142.0px;" width="16" height="16" viewBox="0 0 16 16"><g opacity="1"><circle cx="6.8" cy="6.8" r="5.2" fill="#fff" stroke="#3a3a3a" stroke-width="1.5"/><path d="M10.6 10.6L15 15" stroke="#3a3a3a" stroke-width="2"/><path d="M3.5 6.8H10M3.5 6.8L6.5 4.2V9.4z" fill="#d8960c" stroke="#d8960c" stroke-width="1.2"/></g></svg>
<svg class="r" style="left:579.0px;top:142.0px;" width="16" height="16" viewBox="0 0 16 16"><g opacity="1"><circle cx="6.8" cy="6.8" r="5.2" fill="#fff" stroke="#a8a8a8" stroke-width="1.5"/><path d="M10.6 10.6L15 15" stroke="#a8a8a8" stroke-width="2"/><path d="M3.5 6.8H10M10 6.8L7 4.2V9.4z" fill="#c8c8c8" stroke="#c8c8c8" stroke-width="1.2"/></g></svg>
<div class="r" style="left:600px;top:141px;width:1px;height:19px;background:#d0d0d8;"></div>
<div class="r" style="left:604px;top:139px;width:22px;height:22px;background:#edf1f8;border:1px solid #3c8ce6;box-sizing:border-box;"></div>
<svg class="r" style="left:607.0px;top:142.0px;" width="16" height="16" viewBox="0 0 16 16"><path d="M8 1L14.5 4V11.5L8 15L1.5 11.5V4z" fill="#666" stroke="#222" stroke-width="1.1"/><path d="M1.5 4L8 7.2L14.5 4L8 1z" fill="#9a9a9a" stroke="#222" stroke-width="1"/><path d="M8 7.2V15" stroke="#222" stroke-width="1"/><path d="M8 7.2L14.5 4V11.5L8 15z" fill="#6e6e6e" stroke="#222" stroke-width="1"/></svg>
<svg class="r" style="left:629.0px;top:142.0px;" width="16" height="16" viewBox="0 0 16 16"><path d="M8 1.5L14.5 4.5V11.5L8 14.5L1.5 11.5V4.5z" fill="#9a9a9a"/><path d="M1.5 4.5L8 7.5L14.5 4.5L8 1.5z" fill="#d4d4d4"/><path d="M8 7.5L14.5 4.5V11.5L8 14.5z" fill="#b4b4b4"/></svg>
<svg class="r" style="left:651.0px;top:142.0px;" width="16" height="16" viewBox="0 0 16 16"><path d="M8.5 1.5L13 3.5V8L10.5 9.5L6 7.5V3z" fill="#fff" stroke="#333" stroke-width="1"/><path d="M6 3L10.5 5V9.5M10.5 5L13 3.5" fill="none" stroke="#333" stroke-width="0.9"/><path d="M3 8.5L8 10.5V14L5.5 15.2L1 13V10z" fill="#d8960c" stroke="#333" stroke-width="1"/><path d="M1 10L5.5 12V15.2M5.5 12L8 10.5" fill="none" stroke="#333" stroke-width="0.9"/><path d="M2 6C2 3.5 3.5 2.5 5 2.3" fill="none" stroke="#555" stroke-width="1" stroke-dasharray="1.5 1"/><path d="M13.5 10C13.5 12.5 12 13.8 10 14" fill="none" stroke="#555" stroke-width="1" stroke-dasharray="1.5 1"/></svg>
<div class="r" style="left:672px;top:141px;width:1px;height:19px;background:#d0d0d8;"></div>
<svg class="r" style="left:679.0px;top:142.0px;" width="16" height="16" viewBox="0 0 16 16"><rect x="0.8" y="0.8" width="5" height="5" fill="#fff" stroke="#8a8a8a"/><path d="M7 3L10 6M10 6V3.5M10 6H7.5" stroke="#b8b8b8" stroke-width="1" fill="none"/><rect x="7.5" y="8" width="7" height="7" fill="#fff" stroke="#8a8a8a"/><path d="M11 8V15M7.5 11.5H14.5" stroke="#8a8a8a"/></svg>
<div class="r" style="left:700px;top:141px;width:1px;height:19px;background:#d0d0d8;"></div>
<div class="r" style="left:704px;top:139px;width:33px;height:22px;background:#edf1f8;border:1px solid #3c8ce6;box-sizing:border-box;"></div>
<svg class="r" style="left:707.0px;top:142.0px;" width="16" height="16" viewBox="0 0 16 16"><path d="M2.5 7A5.7 5.7 0 0 1 13 5" fill="none" stroke="#333" stroke-width="1.3"/><path d="M13.5 9A5.7 5.7 0 0 1 3 11" fill="none" stroke="#333" stroke-width="1.3"/><path d="M1 5.2L2.6 8.8L4.8 6z" fill="#d8960c"/><path d="M15 10.8L13.4 7.2L11.2 10z" fill="#d8960c"/></svg>
<svg class="r" style="left:728px;top:148px;" width="7" height="4" viewBox="0 0 7 4"><path d="M0 0H7L3.5 4z" fill="#777"/></svg>
<svg class="r" style="left:740.0px;top:142.0px;" width="16" height="16" viewBox="0 0 16 16"><path d="M8 0.5L10.5 3.5H5.5zM8 15.5L10.5 12.5H5.5zM0.5 8L3.5 5.5V10.5zM15.5 8L12.5 5.5V10.5z" fill="#d8960c"/><path d="M8 5V11M5 8H11" stroke="#222" stroke-width="1.2" stroke-dasharray="1.3 1"/><circle cx="8" cy="8" r="1" fill="#222"/></svg>
<svg class="r" style="left:762.0px;top:142.0px;" width="16" height="16" viewBox="0 0 16 16"><g opacity="1"><circle cx="6.8" cy="6.8" r="5.2" fill="#fff" stroke="#3a3a3a" stroke-width="1.5"/><path d="M10.6 10.6L15 15" stroke="#3a3a3a" stroke-width="2"/><path d="M6.8 3L9 5.5H4.6zM6.8 10.6L9 8.1H4.6z" fill="#d8960c"/><path d="M4.4 6.8H9.2" stroke="#d8960c" stroke-width="1"/></g></svg>
<svg class="r" style="left:783.5px;top:142.0px;" width="16" height="16" viewBox="0 0 16 16"><g opacity="1"><circle cx="6.8" cy="6.8" r="5.2" fill="#fff" stroke="#3a3a3a" stroke-width="1.5"/><path d="M10.6 10.6L15 15" stroke="#3a3a3a" stroke-width="2"/><path d="M6.8 3.8V9.8M3.8 6.8H9.8" stroke="#d8960c" stroke-width="2.2"/></g></svg>
<svg class="r" style="left:806.0px;top:142.0px;" width="16" height="16" viewBox="0 0 16 16"><g opacity="1"><circle cx="6.8" cy="6.8" r="5.2" fill="#fff" stroke="#3a3a3a" stroke-width="1.5"/><path d="M10.6 10.6L15 15" stroke="#3a3a3a" stroke-width="2"/><path d="M6.8 4L9.3 5.3V8.2L6.8 9.6L4.3 8.2V5.3z" fill="#4a80d0" stroke="#224" stroke-width="0.6"/><path d="M4.3 5.3L6.8 6.6L9.3 5.3" fill="none" stroke="#cde" stroke-width="0.6"/></g></svg>
<svg class="r" style="left:827.5px;top:142.0px;" width="16" height="16" viewBox="0 0 16 16"><g opacity="1"><circle cx="6.8" cy="6.8" r="5.2" fill="#fff" stroke="#3a3a3a" stroke-width="1.5"/><path d="M10.6 10.6L15 15" stroke="#3a3a3a" stroke-width="2"/><path d="M6.8 4L9.3 5.3V8.2L6.8 9.6L4.3 8.2V5.3z" fill="#30b040" stroke="#224" stroke-width="0.6"/><path d="M4.3 5.3L6.8 6.6L9.3 5.3" fill="none" stroke="#cde" stroke-width="0.6"/></g></svg>
<svg class="r" style="left:850.0px;top:142.0px;" width="16" height="16" viewBox="0 0 16 16"><g opacity="1"><circle cx="6.8" cy="6.8" r="5.2" fill="#fff" stroke="#3a3a3a" stroke-width="1.5"/><path d="M10.6 10.6L15 15" stroke="#3a3a3a" stroke-width="2"/><path d="M6.8 3L9 5.3H4.6zM6.8 10.6L9 8.3H4.6z" fill="#d8960c"/><path d="M4.4 6.8H9.2" stroke="#d8960c" stroke-width="1.4"/></g></svg>
<div class="r" style="left:871px;top:141px;width:1px;height:19px;background:#d0d0d8;"></div>
<span class="t" style="left:879.00px;top:143.30px;font-size:11.5px;line-height:14px;color:#1e1e1e;letter-spacing:-0.192px;">Select</span>
<svg class="r" style="left:918px;top:142px;" width="14" height="15" viewBox="0 0 14 15"><rect x="0" y="0.5" width="6" height="6" fill="#e81123"/><path d="M5 4L12.5 9.5L9.8 10L11.8 13.8L10 14.6L8.2 10.8L6 12.8z" fill="#333"/></svg>
<span class="t" style="left:935.40px;top:143.30px;font-size:11.5px;line-height:14px;color:#1e1e1e;letter-spacing:0.745px;">Mode</span>
<svg class="r" style="left:968px;top:148px;" width="7" height="4" viewBox="0 0 7 4"><path d="M0 0H7L3.5 4z" fill="#777"/></svg>
<svg class="r" style="left:984.5px;top:142.0px;" width="16" height="16" viewBox="0 0 16 16"><g fill="none" stroke="#8c8c8c" stroke-width="1.1"><path d="M1 7.5V1.5H7M3.8 4.5V7.5M9 7.5V1.5H15M11 7.5V4H15M1 15.5V9.5H7M3.8 15.5V12H7"/><circle cx="3.8" cy="3.8" r="1"/><path d="M10.5 9.5L13.5 13L11.8 12.8" stroke-width="1"/></g></svg>
<svg class="r" style="left:1007.0px;top:142.0px;" width="16" height="16" viewBox="0 0 16 16"><path d="M1.2 1.5H11L15 5.3H5z" fill="#fdfdfd" stroke="#8c8c8c" stroke-width="1.1" stroke-linejoin="round"/><path d="M1.2 1.5L5 5.3V15L1.2 11.2z" fill="#fdfdfd" stroke="#8c8c8c" stroke-width="1.1" stroke-linejoin="round"/><rect x="5" y="5.3" width="10" height="9.7" fill="#fdfdfd" stroke="#8c8c8c" stroke-width="1.1"/><circle cx="3.2" cy="3" r="1.3" fill="#fff" stroke="#8c8c8c" stroke-width="0.9"/><path d="M8.3 8L11.8 11.3L10.4 11.5L11.3 13.5L10.5 13.9L9.6 11.9L8.5 12.9z" fill="#9a9a9a"/></svg>
<svg class="r" style="left:1029.0px;top:142.0px;" width="16" height="16" viewBox="0 0 16 16"><path d="M1.2 1.5H11L15 5.3H5z" fill="#fdfdfd" stroke="#8c8c8c" stroke-width="1.1" stroke-linejoin="round"/><path d="M1.2 1.5L5 5.3V15L1.2 11.2z" fill="#fdfdfd" stroke="#8c8c8c" stroke-width="1.1" stroke-linejoin="round"/><rect x="5" y="5.3" width="10" height="9.7" fill="#fdfdfd" stroke="#8c8c8c" stroke-width="1.1"/><path d="M1.2 1.5L5 5.3" stroke="#6a6a6a" stroke-width="1.8"/><path d="M8.3 8L11.8 11.3L10.4 11.5L11.3 13.5L10.5 13.9L9.6 11.9L8.5 12.9z" fill="#9a9a9a"/></svg>
<svg class="r" style="left:1051.0px;top:142.0px;" width="16" height="16" viewBox="0 0 16 16"><path d="M1.2 1.5H11L15 5.3H5z" fill="#b8b8b8" stroke="#8c8c8c" stroke-width="1.1" stroke-linejoin="round"/><path d="M1.2 1.5L5 5.3V15L1.2 11.2z" fill="#fdfdfd" stroke="#8c8c8c" stroke-width="1.1" stroke-linejoin="round"/><rect x="5" y="5.3" width="10" height="9.7" fill="#fdfdfd" stroke="#8c8c8c" stroke-width="1.1"/><path d="M8.3 8L11.8 11.3L10.4 11.5L11.3 13.5L10.5 13.9L9.6 11.9L8.5 12.9z" fill="#9a9a9a"/></svg>
<svg class="r" style="left:1073.0px;top:142.0px;" width="16" height="16" viewBox="0 0 16 16"><path d="M1.2 1.5H11L15 5.3H5z" fill="#b8b8b8" stroke="#8c8c8c" stroke-width="1.1" stroke-linejoin="round"/><path d="M1.2 1.5L5 5.3V15L1.2 11.2z" fill="#adadad" stroke="#8c8c8c" stroke-width="1.1" stroke-linejoin="round"/><rect x="5" y="5.3" width="10" height="9.7" fill="#c4c4c4" stroke="#8c8c8c" stroke-width="1.1"/><path d="M8.3 8L11.8 11.3L10.4 11.5L11.3 13.5L10.5 13.9L9.6 11.9L8.5 12.9z" fill="#9a9a9a"/></svg>
<svg class="r" style="left:1095.0px;top:142.0px;" width="16" height="16" viewBox="0 0 16 16"><path d="M1.2 1.5H11L15 5.3H5z" fill="#fff" stroke="#1e1e1e" stroke-width="1.2" stroke-linejoin="round"/><path d="M1.2 1.5L5 5.3V15L1.2 11.2z" fill="#fff" stroke="#1e1e1e" stroke-width="1.2" stroke-linejoin="round"/><rect x="5" y="5.3" width="10" height="9.7" fill="#fff" stroke="#1e1e1e" stroke-width="1.2"/><path d="M8.3 5.3V15M11.7 5.3V15M5 8.5H15M5 11.8H15M2.4 2.8V12.4M3.7 4V13.7M1.2 4.7L5 8.5M1.2 8L5 11.8M4.4 1.5L8.3 5.3M7.7 1.5L11.7 5.3M2.4 2.8H12.2M3.7 4H13.6" stroke="#3f8ef0" stroke-width="0.85" fill="none"/><path d="M8.5 8.2L12 11.5L10.6 11.7L11.5 13.7L10.7 14.1L9.8 12.1L8.7 13.1z" fill="#1e1e1e"/></svg>
<svg class="r" style="left:1117.0px;top:142.0px;" width="16" height="16" viewBox="0 0 16 16"><path d="M1.2 1.5H11L15 5.3H5z" fill="#fff" stroke="#1e1e1e" stroke-width="1.2" stroke-linejoin="round"/><path d="M1.2 1.5L5 5.3V15L1.2 11.2z" fill="#fff" stroke="#1e1e1e" stroke-width="1.2" stroke-linejoin="round"/><rect x="5" y="5.3" width="10" height="9.7" fill="#fff" stroke="#1e1e1e" stroke-width="1.2"/><path d="M8.3 5.3V15M11.7 5.3V15M5 8.5H15M5 11.8H15M2.4 2.8V12.4M3.7 4V13.7M1.2 4.7L5 8.5M1.2 8L5 11.8M4.4 1.5L8.3 5.3M7.7 1.5L11.7 5.3M2.4 2.8H12.2M3.7 4H13.6" stroke="#3f8ef0" stroke-width="0.85" fill="none"/><path d="M3 2.2H5.4M6.4 2.2H8.8M9.8 2.2H11.6M4.4 3.4H6.8M7.8 3.4H10.2M11.2 3.4H13M5.8 4.6H8M9.2 4.6H11.4M12.4 4.6H14" stroke="#10d020" stroke-width="1"/><path d="M8.5 8.2L12 11.5L10.6 11.7L11.5 13.7L10.7 14.1L9.8 12.1L8.7 13.1z" fill="#1e1e1e"/></svg>
<svg class="r" style="left:1139.0px;top:142.0px;" width="16" height="16" viewBox="0 0 16 16"><path d="M1.2 1.5H11L15 5.3H5z" fill="#fff" stroke="#1e1e1e" stroke-width="1.2" stroke-linejoin="round"/><path d="M1.2 1.5L5 5.3V15L1.2 11.2z" fill="#fff" stroke="#1e1e1e" stroke-width="1.2" stroke-linejoin="round"/><rect x="5" y="5.3" width="10" height="9.7" fill="#fff" stroke="#1e1e1e" stroke-width="1.2"/><path d="M8.3 5.3V15M11.7 5.3V15M5 8.5H15M5 11.8H15M2.4 2.8V12.4M3.7 4V13.7M1.2 4.7L5 8.5M1.2 8L5 11.8M4.4 1.5L8.3 5.3M7.7 1.5L11.7 5.3M2.4 2.8H12.2M3.7 4H13.6" stroke="#3f8ef0" stroke-width="0.85" fill="none"/><path d="M6 6.9H7.6M9 6.9H11M6 10.1H7.6M9 10.1H11M6 13.4H7.6M9 13.4H11M6.2 8.6V9.2M9.8 8.6V9.2" stroke="#10d020" stroke-width="1.5"/><path d="M2.2 4.2V5.6M3.4 5.5V6.9M2.2 7.6V9M3.4 8.9V10.3" stroke="#10d020" stroke-width="1"/><path d="M8.5 8.2L12 11.5L10.6 11.7L11.5 13.7L10.7 14.1L9.8 12.1L8.7 13.1z" fill="#1e1e1e"/></svg>
<svg class="r" style="left:1161.0px;top:142.0px;" width="16" height="16" viewBox="0 0 16 16"><text x="8" y="6" font-family="Liberation Sans" font-size="5.5" fill="#b8b8b8" text-anchor="middle">X,Y,Z</text><path d="M6.5 7.5L10 11L8.6 11.2L9.6 13.4L8.8 13.8L7.8 11.6L6.5 12.6z" fill="#c0c0c0"/></svg>
<svg class="r" style="left:1183.0px;top:142.0px;" width="16" height="16" viewBox="0 0 16 16"><path d="M1.5 2.5H12L14.7 5L12 7.5H1.5z" fill="#fff" stroke="#222" stroke-width="1.2"/><path d="M3.8 3.8V6.2" stroke="#222" stroke-width="1"/><ellipse cx="6.6" cy="5" rx="1" ry="1.2" fill="none" stroke="#222" stroke-width="0.9"/><ellipse cx="10" cy="5" rx="1" ry="1.2" fill="none" stroke="#222" stroke-width="0.9"/><path d="M6.3 8.2L8.2 11.3L9.5 10.2L10.8 15L8.6 13.6L7.2 14.6z" fill="#e0a010"/></svg>
<svg class="r" style="left:1205.0px;top:142.0px;" width="16" height="16" viewBox="0 0 16 16"><path d="M1 2.5H11.5L15 8L11.5 13.5H1z" fill="#dcdcdc" stroke="#adadad" stroke-width="1.1"/><text x="6.8" y="10.3" font-family="Liberation Sans" font-size="6.5" fill="#a0a0a0" text-anchor="middle">Abc</text><path d="M11 11.5L14 15" stroke="#b8b8b8" stroke-width="1.6"/></svg>
<div class="r" style="left:1226px;top:141px;width:1px;height:19px;background:#d0d0d8;"></div>
<svg class="r" style="left:1234px;top:142px;" width="14" height="15" viewBox="0 0 14 15"><rect x="0.6" y="1.2" width="12.8" height="13.2" fill="#eab940" stroke="#6a5010" stroke-width="1"/><rect x="4.5" y="0.3" width="5" height="2.2" fill="#6a5010"/></svg>
<span class="t" style="left:1251.70px;top:143.30px;font-size:11.5px;line-height:14px;color:#1e1e1e;letter-spacing:0.222px;">Clipboard</span>
<svg class="r" style="left:1305px;top:148px;" width="7" height="4" viewBox="0 0 7 4"><path d="M0 0H7L3.5 4z" fill="#777"/></svg>
<span class="t" style="left:1323.00px;top:143.30px;font-size:11.5px;line-height:14px;color:#1e1e1e;letter-spacing:0.329px;">[ Empty ]</span>
<div class="r" style="left:1377px;top:141px;width:1px;height:19px;background:#d0d0d8;"></div>
<svg class="r" style="left:1385px;top:142px;" width="15" height="15" viewBox="0 0 15 15"><path d="M1 5L7.5 2L14 5V11L7.5 14.5L1 11z" fill="#fff" stroke="#333" stroke-width="1"/><path d="M1 5L7.5 8L14 5M7.5 8V14.5" fill="none" stroke="#333" stroke-width="1"/><path d="M1 5L7.5 8V14.5L1 11z" fill="#30c030"/><path d="M7.5 2.8V6.2M5.5 4.5H9.5" stroke="#d8960c" stroke-width="1.2"/></svg>
<span class="t" style="left:1402.60px;top:143.30px;font-size:11.5px;line-height:14px;color:#1e1e1e;letter-spacing:-0.080px;">Extend</span>
<svg class="r" style="left:1440px;top:148px;" width="7" height="4" viewBox="0 0 7 4"><path d="M0 0H7L3.5 4z" fill="#777"/></svg>
<svg class="r" style="left:1457.5px;top:142px;" width="15" height="17" viewBox="0 0 15 17"><path d="M7.5 1C9.8 1 11 2.7 11 4.6C11 7.2 7.5 11.3 7.5 11.3C7.5 11.3 4 7.2 4 4.6C4 2.7 5.2 1 7.5 1z" fill="#d8a010"/><circle cx="7.5" cy="4.5" r="1.3" fill="#fff"/><path d="M0.8 14.3H14.2M0.8 14.3L2.3 12.2M14.2 14.3L12.7 12.2" stroke="#444" stroke-width="1" fill="none"/></svg>
<span class="t" style="left:1475.80px;top:143.30px;font-size:11.5px;line-height:14px;color:#1e1e1e;letter-spacing:-0.260px;">Select By</span>
<svg class="r" style="left:1524.5px;top:148px;" width="7" height="4" viewBox="0 0 7 4"><path d="M0 0H7L3.5 4z" fill="#777"/></svg>
<svg class="r" style="left:1542px;top:143px;" width="15" height="14" viewBox="0 0 15 14"><path d="M0.5 5.5H4M2.5 3.8L4.3 5.5L2.5 7.2" stroke="#d8960c" stroke-width="1" fill="none"/><path d="M5 3H12V5H14.5V13H7V10.5H5z" fill="#20c020" stroke="#0a5a0a" stroke-width="1"/><path d="M7 5H12V10.5" fill="none" stroke="#0a5a0a" stroke-width="0.9"/></svg>
<span class="t" style="left:1559.70px;top:143.30px;font-size:11.5px;line-height:14px;color:#1e1e1e;letter-spacing:0.256px;">Convert</span>
<svg class="r" style="left:1603.5px;top:148px;" width="7" height="4" viewBox="0 0 7 4"><path d="M0 0H7L3.5 4z" fill="#777"/></svg>
<svg class="r" style="left:1618.5px;top:154px;" width="7" height="4" viewBox="0 0 7 4"><path d="M0 0H7L3.5 3.8z" fill="#111"/></svg>
<svg class="r" style="left:530px;top:163px;" width="1390" height="672" viewBox="0 0 1390 672"><defs><linearGradient id="vbg" x1="0" y1="0" x2="0" y2="1"><stop offset="0" stop-color="#6c8adc"/><stop offset="0.985" stop-color="#ffffff"/><stop offset="1" stop-color="#ffffff"/></linearGradient><radialGradient id="sph" cx="0.62" cy="0.35" r="0.7"><stop offset="0" stop-color="#20f0f0"/><stop offset="0.55" stop-color="#10c0c0"/><stop offset="1" stop-color="#0a7a80"/></radialGradient><linearGradient id="gx" x1="0" y1="0" x2="0" y2="1"><stop offset="0" stop-color="#f01010"/><stop offset="1" stop-color="#600000"/></linearGradient></defs><rect width="1390" height="672" fill="url(#vbg)"/><path d="M173.0 616.6L1216.8 55.3" stroke="#adb3c6" stroke-width="4.6" fill="none" opacity="0.92"/><path d="M173.0 616.6L1216.8 55.3" stroke="#c4c9d6" stroke-width="2.4" fill="none"/><path d="M174.3 616.4L288.0 556.3" stroke="#0808c8" stroke-width="4.4" stroke-linecap="round"/><path d="M288.0 556.3L339.5 528.9" stroke="#0090d8" stroke-width="4.4"/><path d="M339.5 528.9L381.0 507.2" stroke="#00d8d8" stroke-width="4.4"/><path d="M381.0 507.2L421.0 486.9" stroke="#00d890" stroke-width="4.4"/><path d="M421.0 486.9L458.3 467.9" stroke="#00d010" stroke-width="4.4"/><path d="M458.3 467.9L499.0 447.0" stroke="#98d800" stroke-width="4.4"/><path d="M499.0 447.0L541.0 425.3" stroke="#e0dc00" stroke-width="4.4"/><path d="M541.0 425.3L592.0 399.5" stroke="#dc9400" stroke-width="4.4"/><path d="M592.0 399.5Q704.0 340.7 816.3 278.5" stroke="#dc0000" stroke-width="4.4" fill="none"/><path d="M816.3 278.5L865.6 250.9" stroke="#dc9400" stroke-width="4.4"/><path d="M865.6 250.9L906.3 228.4" stroke="#e0dc00" stroke-width="4.4"/><path d="M906.3 228.4L943.7 207.2" stroke="#98d800" stroke-width="4.4"/><path d="M943.7 207.2L979.0 187.7" stroke="#00d010" stroke-width="4.4"/><path d="M979.0 187.7L1017.0 166.0" stroke="#00d890" stroke-width="4.4"/><path d="M1017.0 166.0L1056.8 142.9" stroke="#00d8d8" stroke-width="4.4"/><path d="M1056.8 142.9L1105.6 115.8" stroke="#0090d8" stroke-width="4.4"/><path d="M1105.6 115.8L1216.8 56.3" stroke="#0808c8" stroke-width="4.4" stroke-linecap="round"/><text x="14.5" y="26.0" font-family="Liberation Sans" font-size="12" font-weight="bold" letter-spacing="-0.398" fill="#000" text-anchor="start" >B: Eigenvalue Buckling</text><text x="15.0" y="41.0" font-family="Liberation Sans" font-size="12" letter-spacing="0.098" fill="#000" text-anchor="start" >Total Deformation</text><text x="15.0" y="56.0" font-family="Liberation Sans" font-size="12" letter-spacing="-0.005" fill="#000" text-anchor="start" >Type: Total Deformation</text><text x="15.0" y="71.0" font-family="Liberation Sans" font-size="12" letter-spacing="-0.122" fill="#000" text-anchor="start" >Load Multiplier (Nonlinear): 3.8853e-002</text><text x="15.0" y="86.0" font-family="Liberation Sans" font-size="12" letter-spacing="0.166" fill="#000" text-anchor="start" >Unit: m</text><text x="15.0" y="101.0" font-family="Liberation Sans" font-size="12" letter-spacing="-0.257" fill="#000" text-anchor="start" >1/12/2023 9:11 PM</text><rect x="15" y="125" width="15" height="152.6" fill="#151515"/><rect x="16.1" y="127.40" width="12.9" height="15.55" fill="#ff0000"/><rect x="16.1" y="143.85" width="12.9" height="15.80" fill="#ffb000"/><rect x="16.1" y="160.55" width="12.9" height="15.80" fill="#ffff00"/><rect x="16.1" y="177.25" width="12.9" height="15.80" fill="#b0ff00"/><rect x="16.1" y="193.95" width="12.9" height="15.80" fill="#00ff00"/><rect x="16.1" y="210.65" width="12.9" height="15.80" fill="#00ffb0"/><rect x="16.1" y="227.35" width="12.9" height="15.80" fill="#00ffff"/><rect x="16.1" y="244.05" width="12.9" height="15.80" fill="#00b0ff"/><rect x="16.1" y="260.75" width="12.9" height="14.85" fill="#0000ff"/><text x="39.8" y="130.0" font-family="Liberation Sans" font-size="12" font-weight="bold" letter-spacing="-0.337" fill="#000" text-anchor="start" >1 Max</text><text x="40.0" y="146.2" font-family="Liberation Sans" font-size="12" letter-spacing="-0.812" fill="#000" text-anchor="start" >0.88889</text><text x="40.0" y="162.9" font-family="Liberation Sans" font-size="12" letter-spacing="-0.812" fill="#000" text-anchor="start" >0.77778</text><text x="40.0" y="179.6" font-family="Liberation Sans" font-size="12" letter-spacing="-0.812" fill="#000" text-anchor="start" >0.66667</text><text x="40.0" y="196.3" font-family="Liberation Sans" font-size="12" letter-spacing="-0.812" fill="#000" text-anchor="start" >0.55556</text><text x="40.0" y="213.0" font-family="Liberation Sans" font-size="12" letter-spacing="-0.812" fill="#000" text-anchor="start" >0.44444</text><text x="40.0" y="229.7" font-family="Liberation Sans" font-size="12" letter-spacing="-0.812" fill="#000" text-anchor="start" >0.33333</text><text x="40.0" y="246.4" font-family="Liberation Sans" font-size="12" letter-spacing="-0.812" fill="#000" text-anchor="start" >0.22222</text><text x="40.0" y="263.1" font-family="Liberation Sans" font-size="12" letter-spacing="-0.218" fill="#000" text-anchor="start" >0.11111</text><text x="39.5" y="280.0" font-family="Liberation Sans" font-size="12" font-weight="bold" letter-spacing="-0.166" fill="#000" text-anchor="start" >0 Min</text><path d="M1272.4 35.9L1284.4 9.3L1292.3 9.3L1280.6 35.9z" fill="#fff"/><path d="M1287.5 16.5L1290.6 9.3L1303.3 35.9L1295.7 35.9z" fill="#fff"/><text x="1305.2" y="36.0" font-family="Liberation Sans" font-size="36" font-weight="bold" letter-spacing="-1.682" fill="#fff" text-anchor="start" stroke="#fff" stroke-width="0.7">nsys</text><text x="1318.7" y="59.8" font-family="Liberation Sans" font-size="18.6" font-weight="bold" letter-spacing="-0.386" fill="#fff" text-anchor="start" stroke="#fff" stroke-width="0.4">2022 R2</text><text x="1279.5" y="88.4" font-family="Liberation Sans" font-size="18.6" font-weight="bold" letter-spacing="0.028" fill="#fff" text-anchor="start" stroke="#fff" stroke-width="0.4">STUDENT</text><path d="M1289.4 580.3L1281.4 531.0" stroke="#0a7a0a" stroke-width="4.2"/><path d="M1278.4 513.0L1289.3 529.0Q1281.0 534.0 1273.0 531.5z" fill="#0a8a0a"/><path d="M1289.4 580.3L1325.0 593.8" stroke="#8a0000" stroke-width="4.2"/><path d="M1340.3 599.8L1329.2 587.8Q1320.0 593.0 1323.5 602.6z" fill="#d01010"/><path d="M1323.5 602.6Q1320.0 593.0 1329.2 587.8L1332.0 593.0z" fill="#700000" opacity="0.55"/><path d="M1289.4 580.3L1249.5 601.7" stroke="#0000d8" stroke-width="4.4"/><path d="M1233.0 610.7L1243.5 596.8Q1253.0 600.0 1251.5 609.6z" fill="#0000c0"/><circle cx="1281.6" cy="572.2" r="7.7" fill="url(#sph)"/><text x="1279.5" y="502.8" font-family="Liberation Sans" font-size="12" fill="#00a000" text-anchor="middle" >Y</text><text x="1351.4" y="603.7" font-family="Liberation Sans" font-size="12" fill="#ff1010" text-anchor="middle" >X</text><text x="1227.6" y="615.6" font-family="Liberation Sans" font-size="12" fill="#1010ff" text-anchor="middle" >Z</text><rect x="481" y="621.5" width="428" height="12.5" fill="#fff" stroke="#444" stroke-width="1"/><rect x="481" y="621.5" width="106.7" height="12.5" fill="#000"/><rect x="694" y="621.5" width="108" height="12.5" fill="#000"/><text x="480.8" y="618.2" font-family="Liberation Sans" font-size="12" letter-spacing="-0.757" fill="#000" text-anchor="middle" >0.000</text><text x="694.0" y="618.2" font-family="Liberation Sans" font-size="12" letter-spacing="-0.74" fill="#000" text-anchor="middle" >15.000</text><text x="919.4" y="618.2" font-family="Liberation Sans" font-size="12" letter-spacing="-0.447" fill="#000" text-anchor="middle" >30.000 (m)</text><text x="587.0" y="651.0" font-family="Liberation Sans" font-size="12" letter-spacing="-0.757" fill="#000" text-anchor="middle" >7.500</text><text x="802.0" y="651.0" font-family="Liberation Sans" font-size="12" letter-spacing="-0.74" fill="#000" text-anchor="middle" >22.500</text></svg>
<div class="r" style="left:527px;top:836px;width:1393px;height:4px;background:#eeeef2;"></div>
<div class="r" style="left:530px;top:839px;width:1390px;height:1px;background:#d0d0dc;"></div>
<div class="r" style="left:530px;top:840px;width:1390px;height:19px;background:#eeeef2;"></div>
<div class="r" style="left:530px;top:840px;width:1px;height:19px;background:#d0d0dc;"></div>
<span class="t" style="left:535.60px;top:842.20px;font-size:11.5px;line-height:14px;color:#444;letter-spacing:-0.109px;">Tabular Data</span>
<svg class="r" style="left:605px;top:846px;" width="1244" height="6" viewBox="0 0 1244 6"><defs><pattern id="gp605_846" width="4" height="4" patternUnits="userSpaceOnUse"><rect x="0" y="0" width="1" height="1" fill="#9a9aa6"/><rect x="2" y="2" width="1" height="1" fill="#9a9aa6"/></pattern></defs><rect width="1244" height="6" fill="url(#gp605_846)"/></svg>
<svg class="r" style="left:1854.5px;top:847px;" width="8" height="5" viewBox="0 0 8 5"><path d="M0 0H8L4 4.5z" fill="#1e1e1e"/></svg>
<svg class="r" style="left:1869.5px;top:843px;" width="10" height="12" viewBox="0 0 10 12"><path d="M3 0.5H7V6.5H3zM6 0.5V6.5" fill="none" stroke="#1e1e1e" stroke-width="1.1"/><path d="M1 7H9M5 7V12" stroke="#1e1e1e" stroke-width="1.2"/></svg>
<svg class="r" style="left:1885.5px;top:844px;" width="11" height="10" viewBox="0 0 11 10"><rect x="0.6" y="0.6" width="9.8" height="8.8" fill="none" stroke="#1e1e1e" stroke-width="1.2"/><path d="M0 1H11" stroke="#1e1e1e" stroke-width="2"/></svg>
<svg class="r" style="left:1902.5px;top:844px;" width="10" height="10" viewBox="0 0 10 10"><path d="M1 1L9 9M9 1L1 9" stroke="#1e1e1e" stroke-width="1.6"/></svg>
<div class="r" style="left:530px;top:859px;width:1390px;height:134px;background:#a0a0a0;"></div>
<div class="r" style="left:530px;top:859px;width:15px;height:18px;background:#f0f0f0;"></div>
<div class="r" style="left:545px;top:859px;width:39px;height:18px;background:#f0f0f0;"></div>
<div class="r" style="left:584px;top:859px;width:106px;height:18px;background:#f0f0f0;"></div>
<div class="r" style="left:530px;top:876px;width:14px;height:1px;background:#5a5a5a;"></div>
<div class="r" style="left:546px;top:876px;width:37px;height:1px;background:#5a5a5a;"></div>
<div class="r" style="left:585px;top:876px;width:105px;height:1px;background:#5a5a5a;"></div>
<div class="r" style="left:544px;top:859px;width:1px;height:18px;background:#646464;"></div>
<div class="r" style="left:583px;top:859px;width:1px;height:18px;background:#646464;"></div>
<div class="r" style="left:689px;top:859px;width:1px;height:18px;background:#8a8a8a;"></div>
<div class="r" style="left:545px;top:859px;width:1px;height:17px;background:#fff;"></div>
<div class="r" style="left:584px;top:859px;width:1px;height:17px;background:#fff;"></div>
<span class="t" style="left:548.40px;top:860.30px;font-size:11.5px;line-height:14px;color:#000;letter-spacing:0.412px;">Mode</span>
<div class="r" style="left:587px;top:861px;width:14px;height:14px;background:#fff;border:1px solid #8a8a8a;box-sizing:border-box;border-right-color:#e0e0e0;border-bottom-color:#e0e0e0;"></div>
<svg class="r" style="left:589px;top:863px;" width="10" height="10" viewBox="0 0 10 10"><path d="M1.5 5L4 8L8.8 1.8" fill="none" stroke="#000" stroke-width="1.9"/></svg>
<span class="t" style="left:606.20px;top:860.30px;font-size:11.5px;line-height:14px;color:#d4001c;letter-spacing:0.230px;">Load Multiplier</span>
<div class="r" style="left:530px;top:877px;width:15px;height:15px;background:#f0f0f0;"></div>
<div class="r" style="left:530px;top:891px;width:14px;height:1px;background:#5a5a5a;"></div>
<div class="r" style="left:530px;top:877px;width:14px;height:1px;background:#fff;"></div>
<div class="r" style="left:545px;top:877px;width:145px;height:15px;background:#e8e6e2;"></div>
<div class="r" style="left:545px;top:891px;width:145px;height:1px;background:#b4b4b4;"></div>
<div class="r" style="left:583px;top:877px;width:1px;height:15px;background:#b4b4b4;"></div>
<div class="r" style="left:689px;top:877px;width:1px;height:15px;background:#b4b4b4;"></div>
<div class="r" style="left:544px;top:877px;width:1px;height:15px;background:#646464;"></div>
<span class="t" style="left:532.80px;top:878.20px;font-size:11.5px;line-height:14px;color:#000;">1</span>
<span class="t" style="left:548.40px;top:878.20px;font-size:11.5px;line-height:14px;color:#000;letter-spacing:-1.090px;">1.</span>
<span class="t" style="left:587.20px;top:878.20px;font-size:11.5px;line-height:14px;color:#000;letter-spacing:-0.418px;">3.8853e-002</span>
<div class="r" style="left:530px;top:892px;width:15px;height:15px;background:#f0f0f0;"></div>
<div class="r" style="left:530px;top:906px;width:14px;height:1px;background:#5a5a5a;"></div>
<div class="r" style="left:530px;top:892px;width:14px;height:1px;background:#fff;"></div>
<div class="r" style="left:545px;top:892px;width:145px;height:15px;background:#e8e6e2;"></div>
<div class="r" style="left:545px;top:906px;width:145px;height:1px;background:#b4b4b4;"></div>
<div class="r" style="left:583px;top:892px;width:1px;height:15px;background:#b4b4b4;"></div>
<div class="r" style="left:689px;top:892px;width:1px;height:15px;background:#b4b4b4;"></div>
<div class="r" style="left:544px;top:892px;width:1px;height:15px;background:#646464;"></div>
<span class="t" style="left:532.80px;top:893.20px;font-size:11.5px;line-height:14px;color:#000;">2</span>
<span class="t" style="left:548.40px;top:893.20px;font-size:11.5px;line-height:14px;color:#000;letter-spacing:-1.090px;">2.</span>
<span class="t" style="left:587.20px;top:893.20px;font-size:11.5px;line-height:14px;color:#000;letter-spacing:-0.418px;">7.5602e-002</span>
<div class="r" style="left:530px;top:907px;width:15px;height:15px;background:#f0f0f0;"></div>
<div class="r" style="left:530px;top:921px;width:14px;height:1px;background:#5a5a5a;"></div>
<div class="r" style="left:530px;top:907px;width:14px;height:1px;background:#fff;"></div>
<div class="r" style="left:545px;top:907px;width:145px;height:15px;background:#e8e6e2;"></div>
<div class="r" style="left:545px;top:921px;width:145px;height:1px;background:#b4b4b4;"></div>
<div class="r" style="left:583px;top:907px;width:1px;height:15px;background:#b4b4b4;"></div>
<div class="r" style="left:689px;top:907px;width:1px;height:15px;background:#b4b4b4;"></div>
<div class="r" style="left:544px;top:907px;width:1px;height:15px;background:#646464;"></div>
<span class="t" style="left:532.80px;top:908.20px;font-size:11.5px;line-height:14px;color:#000;">3</span>
<span class="t" style="left:548.40px;top:908.20px;font-size:11.5px;line-height:14px;color:#000;letter-spacing:-1.090px;">3.</span>
<span class="t" style="left:587.20px;top:908.20px;font-size:11.5px;line-height:14px;color:#000;letter-spacing:-0.511px;">0.14268</span>
<div class="r" style="left:530px;top:922px;width:15px;height:15px;background:#f0f0f0;"></div>
<div class="r" style="left:530px;top:936px;width:14px;height:1px;background:#5a5a5a;"></div>
<div class="r" style="left:530px;top:922px;width:14px;height:1px;background:#fff;"></div>
<div class="r" style="left:545px;top:922px;width:145px;height:15px;background:#e8e6e2;"></div>
<div class="r" style="left:545px;top:936px;width:145px;height:1px;background:#b4b4b4;"></div>
<div class="r" style="left:583px;top:922px;width:1px;height:15px;background:#b4b4b4;"></div>
<div class="r" style="left:689px;top:922px;width:1px;height:15px;background:#b4b4b4;"></div>
<div class="r" style="left:544px;top:922px;width:1px;height:15px;background:#646464;"></div>
<span class="t" style="left:532.80px;top:923.20px;font-size:11.5px;line-height:14px;color:#000;">4</span>
<span class="t" style="left:548.40px;top:923.20px;font-size:11.5px;line-height:14px;color:#000;letter-spacing:-1.090px;">4.</span>
<span class="t" style="left:587.20px;top:923.20px;font-size:11.5px;line-height:14px;color:#000;letter-spacing:-0.511px;">0.21312</span>
<div class="r" style="left:530px;top:937px;width:15px;height:15px;background:#f0f0f0;"></div>
<div class="r" style="left:530px;top:951px;width:14px;height:1px;background:#5a5a5a;"></div>
<div class="r" style="left:530px;top:937px;width:14px;height:1px;background:#fff;"></div>
<div class="r" style="left:545px;top:937px;width:145px;height:15px;background:#e8e6e2;"></div>
<div class="r" style="left:545px;top:951px;width:145px;height:1px;background:#b4b4b4;"></div>
<div class="r" style="left:583px;top:937px;width:1px;height:15px;background:#b4b4b4;"></div>
<div class="r" style="left:689px;top:937px;width:1px;height:15px;background:#b4b4b4;"></div>
<div class="r" style="left:544px;top:937px;width:1px;height:15px;background:#646464;"></div>
<span class="t" style="left:532.80px;top:938.20px;font-size:11.5px;line-height:14px;color:#000;">5</span>
<span class="t" style="left:548.40px;top:938.20px;font-size:11.5px;line-height:14px;color:#000;letter-spacing:-1.090px;">5.</span>
<span class="t" style="left:587.20px;top:938.20px;font-size:11.5px;line-height:14px;color:#000;letter-spacing:-0.511px;">0.31445</span>
<div class="r" style="left:530px;top:993px;width:1390px;height:19px;background:#eeeef2;"></div>
<div class="r" style="left:530px;top:993px;width:77px;height:19px;background:#f5f5f7;border:1px solid #dedee4;box-sizing:border-box;border-top:none;border-bottom:none;"></div>
<span class="t" style="left:536.80px;top:995.00px;font-size:11.5px;line-height:14px;color:#1e7bc8;letter-spacing:-0.109px;">Tabular Data</span>
<span class="t" style="left:613.00px;top:995.00px;font-size:11.5px;line-height:14px;color:#333;letter-spacing:-0.115px;">Graph</span>
<div class="r" style="left:0px;top:1012px;width:1920px;height:20px;background:#007acc;"></div>
<svg class="r" style="left:1443px;top:1014px;" width="17" height="18" viewBox="0 0 17 18"><path d="M0.8 5.5H15.2V12.5H6.5L3 16.8V12.5H0.8z" fill="#f8e49a" stroke="#d8a020" stroke-width="0.9"/><circle cx="9" cy="6" r="5" fill="#1c28d8" stroke="#dfe4ff" stroke-width="0.8"/><text x="9" y="9.2" font-family="Liberation Serif" font-weight="bold" font-size="9" fill="#fff" text-anchor="middle">i</text></svg>
<span class="t" style="left:1460.80px;top:1015.70px;font-size:11.5px;line-height:14px;color:#fff;letter-spacing:-0.144px;">4 Messages</span>
<span class="t" style="left:1539.50px;top:1015.70px;font-size:11.5px;line-height:14px;color:#fff;letter-spacing:0.136px;">No Selection</span>
<svg class="r" style="left:1627.5px;top:1019px;" width="9" height="5" viewBox="0 0 9 5"><path d="M0.3 5L3.6 0.6Q4.5 0 5.4 0.6L8.7 5z" fill="#fff"/></svg>
<span class="t" style="left:1642.50px;top:1015.70px;font-size:11.5px;line-height:14px;color:#fff;letter-spacing:0.171px;">Metric (m, kg, N, s, V, A)</span>
<span class="t" style="left:1782.30px;top:1015.70px;font-size:11.5px;line-height:14px;color:#fff;letter-spacing:-0.327px;">Degrees</span>
<span class="t" style="left:1836.20px;top:1015.70px;font-size:11.5px;line-height:14px;color:#fff;letter-spacing:0.309px;">rad/s</span>
<span class="t" style="left:1875.40px;top:1015.70px;font-size:11.5px;line-height:14px;color:#fff;letter-spacing:-0.168px;">Celsius</span>
</body></html>
